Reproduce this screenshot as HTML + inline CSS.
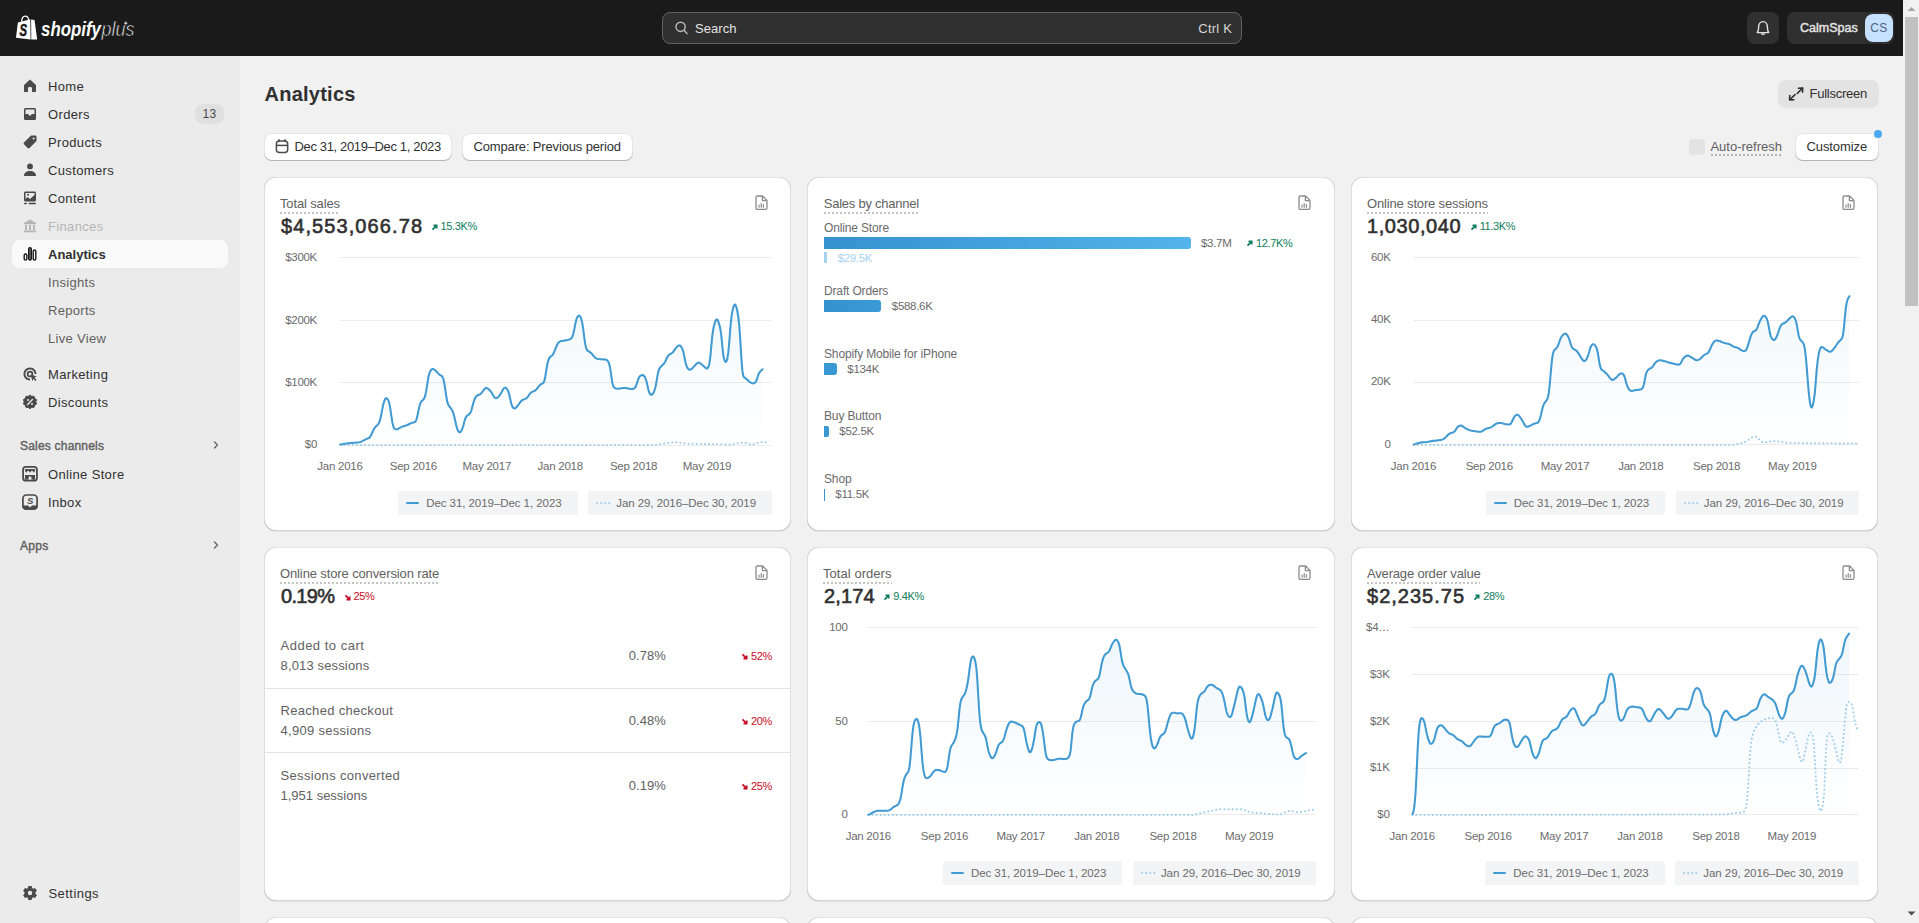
<!DOCTYPE html>
<html><head><meta charset="utf-8"><title>Analytics</title><style>
*{box-sizing:border-box;margin:0;padding:0}
html,body{width:1919px;height:923px;overflow:hidden;background:#f1f1f1;font-family:"Liberation Sans",sans-serif}
.t{position:absolute;white-space:nowrap}
.r{position:absolute}
svg{position:absolute;overflow:visible}
.card{position:absolute;background:#fff;border-radius:12px;
 box-shadow:0 1px 0 0 rgba(26,26,26,.07), inset 1px 0 0 0 rgba(0,0,0,.13), inset -1px 0 0 0 rgba(0,0,0,.13), inset 0 -1px 0 0 rgba(0,0,0,.17), inset 0 1px 0 0 rgba(204,204,204,.5)}
.btn{position:absolute;background:#fff;border-radius:8px;
 box-shadow:inset 0 -1px 0 0 #b5b5b5, inset 0 0 0 1px rgba(0,0,0,.1), inset 0 .5px 0 1.5px #fff}
.dot{border-bottom:2px dotted #cccccc;}
</style></head>
<body>
<div class="r" style="left:0px;top:56px;width:240px;height:867px;background:#ebebeb"></div>
<svg style="left:20px;top:76px" width="20" height="20" viewBox="0 0 20 20"><path d="M4 9 L10 3.6 L16 9 L16 15 C16 15.6 15.6 16 15 16 L12 16 L12 12.2 C12 11.4 11.3 11 10 11 C8.7 11 8 11.4 8 12.2 L8 16 L5 16 C4.4 16 4 15.6 4 15 Z" fill="#4a4a4a"/></svg>
<div class="t" style="left:48.00px;top:80.00px;font-size:13px;line-height:13px;color:#303030;font-weight:400;letter-spacing:0.35px;">Home</div>
<svg style="left:20px;top:104px" width="20" height="20" viewBox="0 0 20 20"><path d="M5.6 4 L14.4 4 C15.3 4 16 4.7 16 5.6 L16 14.4 C16 15.3 15.3 16 14.4 16 L5.6 16 C4.7 16 4 15.3 4 14.4 L4 5.6 C4 4.7 4.7 4 5.6 4 Z M5.5 5.5 L5.5 10 L8 10 L10 12 L12 10 L14.5 10 L14.5 5.5 Z" fill="#4a4a4a" fill-rule="evenodd"/></svg>
<div class="t" style="left:48.00px;top:108.00px;font-size:13px;line-height:13px;color:#303030;font-weight:400;letter-spacing:0.35px;">Orders</div>
<svg style="left:20px;top:132px" width="20" height="20" viewBox="0 0 20 20"><path d="M11 3.5 L15 3.5 C15.8 3.5 16.5 4.2 16.5 5 L16.5 9 L9.5 16 C9 16.5 8.2 16.5 7.7 16 L4 12.3 C3.5 11.8 3.5 11 4 10.5 Z" fill="#4a4a4a"/><circle cx="13.6" cy="6.5" r="1.1" fill="#ebebeb"/></svg>
<div class="t" style="left:48.00px;top:136.00px;font-size:13px;line-height:13px;color:#303030;font-weight:400;letter-spacing:0.35px;">Products</div>
<svg style="left:20px;top:160px" width="20" height="20" viewBox="0 0 20 20"><circle cx="10" cy="6.4" r="2.9" fill="#4a4a4a"/><path d="M4 16 C4 12.5 6.5 11 10 11 C13.5 11 16 12.5 16 16 Z" fill="#4a4a4a"/></svg>
<div class="t" style="left:48.00px;top:164.00px;font-size:13px;line-height:13px;color:#303030;font-weight:400;letter-spacing:0.35px;">Customers</div>
<svg style="left:20px;top:188px" width="20" height="20" viewBox="0 0 20 20"><path d="M5.5 3.5 L14.5 3.5 C15.3 3.5 16 4.2 16 5 L16 12 C16 12.8 15.3 13.5 14.5 13.5 L5.5 13.5 C4.7 13.5 4 12.8 4 12 L4 5 C4 4.2 4.7 3.5 5.5 3.5 Z M5.5 5 L5.5 11 L7.5 9 L10 11 L14.5 7 L14.5 5 Z" fill="#4a4a4a" fill-rule="evenodd"/><circle cx="8" cy="6.8" r="1" fill="#4a4a4a"/><rect x="4" y="14.8" width="3" height="1.4" rx=".7" fill="#4a4a4a"/><rect x="8.5" y="14.8" width="7.5" height="1.4" rx=".7" fill="#4a4a4a"/></svg>
<div class="t" style="left:48.00px;top:192.00px;font-size:13px;line-height:13px;color:#303030;font-weight:400;letter-spacing:0.35px;">Content</div>
<svg style="left:20px;top:216px" width="20" height="20" viewBox="0 0 20 20"><path d="M10 3.5 L16 7 L16 8.2 L4 8.2 L4 7 Z" fill="#b5b5b5"/><rect x="5" y="9" width="2" height="5" fill="#b5b5b5"/><rect x="9" y="9" width="2" height="5" fill="#b5b5b5"/><rect x="13" y="9" width="2" height="5" fill="#b5b5b5"/><rect x="4" y="14.5" width="12" height="1.8" fill="#b5b5b5"/></svg>
<div class="t" style="left:48.00px;top:220.00px;font-size:13px;line-height:13px;color:#b5b5b5;font-weight:400;letter-spacing:0.35px;">Finances</div>
<div class="r" style="left:195px;top:104px;width:29px;height:20px;background:#e0e0e0;border-radius:8px"></div>
<div class="t" style="left:209.50px;top:107.84px;font-size:12px;line-height:12px;color:#4a4a4a;font-weight:400;transform:translateX(-50%);letter-spacing:0.3px;">13</div>
<div class="r" style="left:12px;top:240px;width:216px;height:28px;background:#fafafa;border-radius:8px"></div>
<svg style="left:20px;top:244px" width="20" height="20" viewBox="0 0 20 20"><rect x="4.2" y="10" width="2.6" height="6" rx="1.3" fill="none" stroke="#1a1a1a" stroke-width="1.4"/><rect x="8.7" y="3.6" width="2.6" height="12.4" rx="1.3" fill="#1a1a1a" stroke="#1a1a1a" stroke-width="1.4"/><rect x="13.2" y="6" width="2.6" height="10" rx="1.3" fill="none" stroke="#1a1a1a" stroke-width="1.4"/><rect x="9.5" y="4.5" width="1" height="10.5" fill="#888"/></svg>
<div class="t" style="left:48.00px;top:248.00px;font-size:13px;line-height:13px;color:#303030;font-weight:700;letter-spacing:0.0px;">Analytics</div>
<div class="t" style="left:48.00px;top:276.00px;font-size:13px;line-height:13px;color:#616161;font-weight:400;letter-spacing:0.3px;">Insights</div>
<div class="t" style="left:48.00px;top:304.00px;font-size:13px;line-height:13px;color:#616161;font-weight:400;letter-spacing:0.3px;">Reports</div>
<div class="t" style="left:48.00px;top:332.00px;font-size:13px;line-height:13px;color:#616161;font-weight:400;letter-spacing:0.3px;">Live View</div>
<svg style="left:20px;top:364px" width="20" height="20" viewBox="0 0 20 20"><path d="M10 3.5 C6.4 3.5 3.5 6.4 3.5 10 C3.5 13.6 6.4 16.5 10 16.5 L10 14.6 C7.5 14.6 5.4 12.5 5.4 10 C5.4 7.5 7.5 5.4 10 5.4 C12.5 5.4 14.6 7.5 14.6 10 L16.5 10 C16.5 6.4 13.6 3.5 10 3.5 Z" fill="#4a4a4a"/><circle cx="10" cy="10" r="2.4" fill="none" stroke="#4a4a4a" stroke-width="1.7"/><path d="M10.6 10.6 L16.8 12.6 L14.4 13.8 L16.6 16 L15.6 17 L13.4 14.8 L12.4 17.2 Z" fill="#4a4a4a"/></svg>
<div class="t" style="left:48.00px;top:368.00px;font-size:13px;line-height:13px;color:#303030;font-weight:400;letter-spacing:0.35px;">Marketing</div>
<svg style="left:20px;top:392px" width="20" height="20" viewBox="0 0 20 20"><path d="M10 3 L11.8 4.4 L14 4.2 L14.6 6.4 L16.6 7.6 L15.8 9.8 L16.6 12 L14.6 13.2 L14 15.4 L11.8 15.2 L10 16.8 L8.2 15.2 L6 15.4 L5.4 13.2 L3.4 12 L4.2 9.8 L3.4 7.6 L5.4 6.4 L6 4.2 L8.2 4.4 Z" fill="#4a4a4a" stroke="#4a4a4a" stroke-width="1" stroke-linejoin="round"/><path d="M7.6 12.4 L12.4 7.6" stroke="#ebebeb" stroke-width="1.4" stroke-linecap="round"/><circle cx="8" cy="8" r="1" fill="#ebebeb"/><circle cx="12" cy="12" r="1" fill="#ebebeb"/></svg>
<div class="t" style="left:48.00px;top:396.00px;font-size:13px;line-height:13px;color:#303030;font-weight:400;letter-spacing:0.35px;">Discounts</div>
<div class="t" style="left:20.00px;top:440.14px;font-size:12px;line-height:12px;color:#616161;font-weight:400;letter-spacing:0.2px;-webkit-text-stroke:0.4px #616161;">Sales channels</div>
<svg style="left:210px;top:439px" width="12" height="12" viewBox="0 0 12 12"><path d="M4.5 3 L7.5 6 L4.5 9" fill="none" stroke="#616161" stroke-width="1.3" stroke-linecap="round" stroke-linejoin="round"/></svg>
<svg style="left:20px;top:464px" width="20" height="20" viewBox="0 0 20 20"><rect x="2.2" y="2" width="15.6" height="15.5" rx="3.6" fill="#4a4a4a"/><rect x="4" y="3.8" width="12" height="11.9" rx="1.6" fill="#ebebeb"/><rect x="5" y="5.1" width="10" height="1.9" fill="#4a4a4a"/><path d="M5 7 L7.4 7 L6.2 8.8 Z M8.8 7 L11.2 7 L10 8.8 Z M12.6 7 L15 7 L13.8 8.8 Z" fill="#4a4a4a"/><rect x="5" y="11" width="10" height="4.7" fill="#4a4a4a"/><rect x="8.6" y="12.6" width="2.8" height="3.1" fill="#ebebeb"/></svg>
<div class="t" style="left:48.00px;top:468.00px;font-size:13px;line-height:13px;color:#303030;font-weight:400;letter-spacing:0.35px;">Online Store</div>
<svg style="left:20px;top:492px" width="20" height="20" viewBox="0 0 20 20"><rect x="2.9" y="3" width="14.2" height="14" rx="3.4" fill="none" stroke="#4a4a4a" stroke-width="1.7"/><path d="M2.2 13.4 L8 13.4 L10 15.4 L12 13.4 L17.8 13.4 L17.8 14.2 C17.8 16.4 16.3 17.8 14.2 17.8 L5.8 17.8 C3.7 17.8 2.2 16.4 2.2 14.2 Z" fill="#4a4a4a"/><text x="10.2" y="12.4" font-family="Liberation Sans" font-weight="700" font-style="italic" font-size="9.5" fill="#4a4a4a" text-anchor="middle">S</text></svg>
<div class="t" style="left:48.00px;top:496.00px;font-size:13px;line-height:13px;color:#303030;font-weight:400;letter-spacing:0.35px;">Inbox</div>
<div class="t" style="left:20.00px;top:540.14px;font-size:12px;line-height:12px;color:#616161;font-weight:400;letter-spacing:0.3px;-webkit-text-stroke:0.4px #616161;">Apps</div>
<svg style="left:210px;top:539px" width="12" height="12" viewBox="0 0 12 12"><path d="M4.5 3 L7.5 6 L4.5 9" fill="none" stroke="#616161" stroke-width="1.3" stroke-linecap="round" stroke-linejoin="round"/></svg>
<svg style="left:20px;top:883px" width="20" height="20" viewBox="0 0 20 20"><path d="M8.6 3.5 L11.4 3.5 L11.8 5.4 L13.2 6.2 L15 5.5 L16.4 7.9 L15 9.2 L15 10.8 L16.4 12.1 L15 14.5 L13.2 13.8 L11.8 14.6 L11.4 16.5 L8.6 16.5 L8.2 14.6 L6.8 13.8 L5 14.5 L3.6 12.1 L5 10.8 L5 9.2 L3.6 7.9 L5 5.5 L6.8 6.2 L8.2 5.4 Z" fill="#4a4a4a" stroke="#4a4a4a" stroke-width="1" stroke-linejoin="round"/><circle cx="10" cy="10" r="2.2" fill="#ebebeb"/></svg>
<div class="t" style="left:48.50px;top:886.80px;font-size:13px;line-height:13px;color:#303030;font-weight:400;letter-spacing:0.45px;">Settings</div>
<div class="t" style="left:264.50px;top:84.27px;font-size:20px;line-height:20px;color:#303030;font-weight:700;letter-spacing:0.25px;">Analytics</div>
<div class="r" style="left:1778px;top:80px;width:101px;height:28px;background:#e3e3e3;border-radius:8px"></div>
<svg style="left:1784px;top:82px" width="24" height="24" viewBox="0 0 24 24">
<path d="M14.4 6.2 L18.7 6 L18.5 10.3" fill="none" stroke="#303030" stroke-width="1.6" stroke-linecap="round" stroke-linejoin="round"/>
<path d="M18.3 6.4 L13.2 11.5" stroke="#303030" stroke-width="1.6" stroke-linecap="round"/>
<path d="M5.8 13.6 L5.6 17.9 L9.9 17.7" fill="none" stroke="#303030" stroke-width="1.6" stroke-linecap="round" stroke-linejoin="round"/>
<path d="M6 17.5 L11 12.6" stroke="#303030" stroke-width="1.6" stroke-linecap="round"/></svg>
<div class="t" style="left:1809.50px;top:87.10px;font-size:13px;line-height:13px;color:#303030;font-weight:400;letter-spacing:-0.25px;">Fullscreen</div>
<div class="btn" style="left:264px;top:133px;width:188px;height:28px"></div>
<svg style="left:270px;top:134px" width="24" height="24" viewBox="0 0 24 24">
<rect x="6.4" y="6.9" width="11.3" height="11.7" rx="3" fill="none" stroke="#4a4a4a" stroke-width="1.5"/>
<path d="M6.6 11.4 L17.5 11.4" stroke="#4a4a4a" stroke-width="1.5"/>
<path d="M9 5.8 L9 7.5 M15 5.8 L15 7.5" stroke="#4a4a4a" stroke-width="1.5" stroke-linecap="round"/></svg>
<div class="t" style="left:294.50px;top:140.00px;font-size:13px;line-height:13px;color:#303030;font-weight:400;letter-spacing:-0.35px;">Dec 31, 2019–Dec 1, 2023</div>
<div class="btn" style="left:461.5px;top:133px;width:171px;height:28px"></div>
<div class="t" style="left:473.50px;top:139.80px;font-size:13px;line-height:13px;color:#303030;font-weight:400;letter-spacing:-0.15px;">Compare: Previous period</div>
<div class="r" style="left:1689px;top:139px;width:16px;height:16px;background:#e3e3e3;border-radius:4px"></div>
<div class="t" style="left:1710.40px;top:139.80px;font-size:13px;line-height:13px;color:#616161;font-weight:400;letter-spacing:0.0px;">Auto-refresh</div>
<div class="r" style="left:1710.5px;top:154px;width:71px;height:2px;background-image:linear-gradient(90deg,#b5b5b5 50%,transparent 50%);background-size:4px 2px"></div>
<div class="btn" style="left:1794.5px;top:133px;width:84px;height:28px"></div>
<div class="t" style="left:1806.50px;top:140.00px;font-size:13px;line-height:13px;color:#303030;font-weight:400;letter-spacing:-0.1px;">Customize</div>
<div class="r" style="left:1874px;top:130px;width:8px;height:8px;background:#4aa8ef;border-radius:50%;box-shadow:0 0 0 1.5px #f1f1f1"></div>
<div class="card" style="left:264px;top:177px;width:527.33px;height:354px"></div>
<svg style="left:280px;top:193px" width="70" height="20"><text x="0" y="15.3" font-family="Liberation Sans" font-size="13" fill="#616161" textLength="60" lengthAdjust="spacing">Total sales</text></svg>
<div class="r" style="left:280px;top:212px;width:60px;height:2px;background-image:linear-gradient(90deg,#c4c4c4 50%,transparent 50%);background-size:4px 2px"></div>
<svg style="left:755px;top:195px" width="14" height="16" viewBox="0 0 14 16">
<path d="M2.2 1 L7.6 1 L12 5.4 L12 12.8 C12 13.8 11.3 14.4 10.4 14.4 L2.6 14.4 C1.7 14.4 1 13.8 1 12.8 L1 2.4 C1 1.6 1.5 1 2.2 1 Z" fill="none" stroke="#8a8a8a" stroke-width="1.3" stroke-linejoin="round"/>
<path d="M7.4 1.3 L7.4 5.6 L11.7 5.6" fill="none" stroke="#8a8a8a" stroke-width="1.3"/>
<path d="M4 12.2 L4 10 M6.2 12.2 L6.2 8.6 M8.4 12.2 L8.4 9.6" stroke="#8a8a8a" stroke-width="1.2" stroke-linecap="round"/></svg>
<svg style="left:280.5px;top:215px" width="151" height="24"><text x="0" y="18.2" font-family="Liberation Sans" font-weight="400" font-size="20" fill="#303030" stroke="#303030" stroke-width="0.6" textLength="141" lengthAdjust="spacing">$4,553,066.78</text></svg>
<svg style="left:430.5px;top:222.5px" width="8" height="9" viewBox="0 0 8 9"><path d="M1.5 6.6 L5.7 2.4 M2.5 2.4 L5.7 2.4 L5.7 5.6" fill="none" stroke="#0c7d5b" stroke-width="1.7" stroke-linecap="butt" stroke-linejoin="miter"/></svg>
<div class="t" style="left:440.50px;top:221.19px;font-size:11px;line-height:11px;color:#0c7d5b;font-weight:400;letter-spacing:-0.35px;">15.3K%</div>
<div class="r" style="left:340px;top:257px;width:431.20000000000005px;height:1px;background:#ebebeb"></div>
<div class="t" style="left:317.00px;top:252.07px;font-size:11.5px;line-height:11.5px;color:#6b6b6b;font-weight:400;transform:translateX(-100%);letter-spacing:-0.3px;">$300K</div>
<div class="r" style="left:340px;top:320px;width:431.20000000000005px;height:1px;background:#ebebeb"></div>
<div class="t" style="left:317.00px;top:314.67px;font-size:11.5px;line-height:11.5px;color:#6b6b6b;font-weight:400;transform:translateX(-100%);letter-spacing:-0.3px;">$200K</div>
<div class="r" style="left:340px;top:382px;width:431.20000000000005px;height:1px;background:#ebebeb"></div>
<div class="t" style="left:317.00px;top:377.07px;font-size:11.5px;line-height:11.5px;color:#6b6b6b;font-weight:400;transform:translateX(-100%);letter-spacing:-0.3px;">$100K</div>
<div class="r" style="left:340px;top:445px;width:431.20000000000005px;height:1px;background:#ebebeb"></div>
<div class="t" style="left:317.00px;top:439.47px;font-size:11.5px;line-height:11.5px;color:#6b6b6b;font-weight:400;transform:translateX(-100%);letter-spacing:-0.3px;">$0</div>
<div class="t" style="left:340.00px;top:460.87px;font-size:11.5px;line-height:11.5px;color:#6b6b6b;font-weight:400;transform:translateX(-50%);letter-spacing:-0.25px;">Jan 2016</div>
<div class="t" style="left:413.40px;top:460.87px;font-size:11.5px;line-height:11.5px;color:#6b6b6b;font-weight:400;transform:translateX(-50%);letter-spacing:-0.25px;">Sep 2016</div>
<div class="t" style="left:486.79px;top:460.87px;font-size:11.5px;line-height:11.5px;color:#6b6b6b;font-weight:400;transform:translateX(-50%);letter-spacing:-0.25px;">May 2017</div>
<div class="t" style="left:560.19px;top:460.87px;font-size:11.5px;line-height:11.5px;color:#6b6b6b;font-weight:400;transform:translateX(-50%);letter-spacing:-0.25px;">Jan 2018</div>
<div class="t" style="left:633.58px;top:460.87px;font-size:11.5px;line-height:11.5px;color:#6b6b6b;font-weight:400;transform:translateX(-50%);letter-spacing:-0.25px;">Sep 2018</div>
<div class="t" style="left:706.98px;top:460.87px;font-size:11.5px;line-height:11.5px;color:#6b6b6b;font-weight:400;transform:translateX(-50%);letter-spacing:-0.25px;">May 2019</div>
<svg style="left:0;top:0" width="1903" height="923" viewBox="0 0 1903 923">
<defs><linearGradient id="g1" x1="0" y1="257.8" x2="0" y2="445.2" gradientUnits="userSpaceOnUse"><stop offset="0" stop-color="#419bd2" stop-opacity="0.09"/><stop offset="1" stop-color="#419bd2" stop-opacity="0"/></linearGradient></defs>
<path d="M340.3 444.44 L341.3 444.32 L342.3 444.15 L343.3 443.98 L344.3 443.82 L345.3 443.66 L346.3 443.52 L347.3 443.39 L348.3 443.28 L349.3 443.18 L350.3 443.08 L351.3 442.99 L352.3 442.90 L353.3 442.80 L354.3 442.72 L355.3 442.66 L356.3 442.60 L357.3 442.54 L358.3 442.44 L359.3 442.29 L360.3 442.05 L361.3 441.68 L362.3 441.18 L363.3 440.63 L364.3 440.09 L365.3 439.56 L366.3 439.05 L367.3 438.61 L368.3 438.25 L369.3 437.75 L370.3 436.62 L371.3 434.66 L372.3 432.34 L373.3 430.20 L374.3 428.38 L375.3 427.02 L376.3 426.07 L377.3 425.23 L378.3 424.09 L379.3 422.20 L380.3 419.18 L381.3 414.59 L382.3 409.09 L383.3 404.39 L384.3 400.91 L385.3 398.74 L386.3 398.12 L387.3 398.75 L388.3 400.27 L389.3 403.22 L390.3 408.62 L391.3 415.55 L392.3 421.96 L393.3 426.43 L394.3 428.52 L395.3 429.22 L396.3 429.34 L397.3 429.16 L398.3 428.74 L399.3 428.19 L400.3 427.60 L401.3 427.07 L402.3 426.63 L403.3 426.28 L404.3 425.97 L405.3 425.67 L406.3 425.34 L407.3 424.95 L408.3 424.50 L409.3 424.00 L410.3 423.51 L411.3 423.09 L412.3 422.78 L413.3 422.57 L414.3 422.30 L415.3 421.67 L416.3 419.98 L417.3 416.39 L418.3 411.54 L419.3 406.96 L420.3 403.49 L421.3 401.50 L422.3 400.50 L423.3 399.70 L424.3 398.31 L425.3 395.41 L426.3 390.38 L427.3 383.78 L428.3 377.56 L429.3 373.55 L430.3 371.13 L431.3 369.64 L432.3 369.00 L433.3 369.07 L434.3 369.58 L435.3 370.31 L436.3 371.25 L437.3 372.41 L438.3 373.59 L439.3 374.52 L440.3 375.14 L441.3 375.67 L442.3 376.60 L443.3 378.83 L444.3 383.29 L445.3 389.65 L446.3 396.55 L447.3 401.93 L448.3 404.85 L449.3 406.36 L450.3 407.51 L451.3 408.88 L452.3 410.73 L453.3 413.23 L454.3 416.74 L455.3 421.31 L456.3 425.68 L457.3 428.99 L458.3 431.30 L459.3 432.38 L460.3 432.08 L461.3 430.77 L462.3 428.74 L463.3 425.71 L464.3 421.81 L465.3 418.43 L466.3 416.43 L467.3 415.43 L468.3 414.82 L469.3 414.14 L470.3 412.93 L471.3 410.58 L472.3 406.92 L473.3 402.95 L474.3 399.86 L475.3 397.70 L476.3 396.30 L477.3 395.49 L478.3 395.01 L479.3 394.61 L480.3 394.06 L481.3 393.19 L482.3 391.96 L483.3 390.54 L484.3 389.24 L485.3 388.35 L486.3 388.05 L487.3 388.28 L488.3 388.87 L489.3 389.69 L490.3 390.73 L491.3 392.12 L492.3 393.86 L493.3 395.69 L494.3 397.18 L495.3 398.01 L496.3 398.13 L497.3 397.71 L498.3 396.96 L499.3 395.91 L500.3 394.45 L501.3 392.66 L502.3 390.78 L503.3 389.10 L504.3 387.94 L505.3 387.62 L506.3 388.18 L507.3 389.46 L508.3 391.47 L509.3 394.76 L510.3 399.44 L511.3 403.79 L512.3 406.47 L513.3 407.86 L514.3 408.41 L515.3 408.15 L516.3 407.25 L517.3 406.06 L518.3 404.82 L519.3 403.52 L520.3 402.20 L521.3 401.02 L522.3 400.12 L523.3 399.56 L524.3 399.21 L525.3 398.89 L526.3 398.37 L527.3 397.45 L528.3 396.11 L529.3 394.58 L530.3 393.25 L531.3 392.34 L532.3 391.79 L533.3 391.41 L534.3 391.00 L535.3 390.39 L536.3 389.46 L537.3 388.28 L538.3 386.97 L539.3 385.71 L540.3 384.70 L541.3 384.05 L542.3 383.62 L543.3 382.97 L544.3 381.07 L545.3 376.49 L546.3 370.00 L547.3 364.35 L548.3 360.36 L549.3 357.98 L550.3 356.78 L551.3 356.08 L552.3 355.30 L553.3 353.91 L554.3 351.73 L555.3 349.19 L556.3 346.72 L557.3 344.49 L558.3 342.84 L559.3 341.86 L560.3 341.36 L561.3 341.09 L562.3 340.92 L563.3 340.75 L564.3 340.56 L565.3 340.37 L566.3 340.20 L567.3 340.05 L568.3 339.86 L569.3 339.59 L570.3 339.14 L571.3 338.29 L572.3 336.67 L573.3 333.85 L574.3 329.43 L575.3 323.98 L576.3 319.68 L577.3 317.10 L578.3 315.76 L579.3 315.64 L580.3 316.70 L581.3 318.91 L582.3 323.08 L583.3 329.72 L584.3 337.52 L585.3 344.45 L586.3 348.58 L587.3 350.38 L588.3 351.20 L589.3 351.75 L590.3 352.35 L591.3 353.18 L592.3 354.30 L593.3 355.56 L594.3 356.77 L595.3 357.74 L596.3 358.41 L597.3 358.79 L598.3 358.99 L599.3 359.09 L600.3 359.15 L601.3 359.22 L602.3 359.31 L603.3 359.39 L604.3 359.45 L605.3 359.54 L606.3 359.77 L607.3 360.34 L608.3 361.65 L609.3 364.21 L610.3 368.85 L611.3 375.98 L612.3 382.67 L613.3 386.26 L614.3 387.69 L615.3 388.28 L616.3 388.56 L617.3 388.70 L618.3 388.71 L619.3 388.61 L620.3 388.46 L621.3 388.28 L622.3 388.11 L623.3 387.99 L624.3 387.93 L625.3 387.98 L626.3 388.12 L627.3 388.33 L628.3 388.58 L629.3 388.81 L630.3 388.99 L631.3 389.06 L632.3 389.01 L633.3 388.81 L634.3 388.35 L635.3 387.31 L636.3 385.24 L637.3 382.19 L638.3 379.14 L639.3 377.04 L640.3 375.88 L641.3 375.25 L642.3 375.01 L643.3 375.32 L644.3 376.33 L645.3 378.04 L646.3 380.66 L647.3 384.78 L648.3 389.45 L649.3 392.62 L650.3 394.28 L651.3 394.91 L652.3 394.47 L653.3 393.05 L654.3 390.88 L655.3 387.76 L656.3 382.83 L657.3 376.58 L658.3 371.63 L659.3 368.89 L660.3 367.37 L661.3 366.24 L662.3 365.22 L663.3 364.25 L664.3 363.13 L665.3 361.48 L666.3 359.29 L667.3 357.14 L668.3 355.60 L669.3 354.67 L670.3 354.06 L671.3 353.49 L672.3 352.75 L673.3 351.69 L674.3 350.34 L675.3 348.94 L676.3 347.68 L677.3 346.56 L678.3 345.70 L679.3 345.37 L680.3 345.79 L681.3 346.95 L682.3 348.76 L683.3 351.63 L684.3 356.27 L685.3 361.60 L686.3 365.44 L687.3 367.62 L688.3 368.95 L689.3 369.66 L690.3 369.71 L691.3 369.14 L692.3 368.20 L693.3 367.14 L694.3 366.09 L695.3 365.03 L696.3 363.96 L697.3 363.08 L698.3 362.62 L699.3 362.71 L700.3 363.27 L701.3 364.09 L702.3 364.97 L703.3 365.85 L704.3 366.79 L705.3 367.72 L706.3 368.39 L707.3 368.37 L708.3 367.12 L709.3 364.02 L710.3 357.37 L711.3 346.09 L712.3 335.54 L713.3 329.02 L714.3 324.53 L715.3 321.23 L716.3 319.46 L717.3 319.59 L718.3 321.47 L719.3 324.60 L720.3 328.82 L721.3 335.42 L722.3 345.83 L723.3 355.19 L724.3 359.78 L725.3 361.70 L726.3 361.76 L727.3 358.81 L728.3 352.20 L729.3 341.73 L730.3 328.60 L731.3 318.06 L732.3 311.64 L733.3 307.38 L734.3 304.84 L735.3 304.62 L736.3 306.84 L737.3 310.98 L738.3 316.92 L739.3 326.20 L740.3 340.25 L741.3 356.87 L742.3 370.17 L743.3 376.02 L744.3 377.55 L745.3 378.18 L746.3 378.88 L747.3 379.81 L748.3 380.81 L749.3 381.69 L750.3 382.38 L751.3 382.92 L752.3 383.28 L753.3 383.38 L754.3 383.13 L755.3 382.42 L756.3 380.82 L757.3 377.90 L758.3 374.73 L759.3 372.65 L760.3 371.38 L761.3 370.41 L762.3 369.74 L762.5 369.30 L762.5 445.2 L340.3 445.2 Z" fill="url(#g1)"/>
<path d="M340.3 445.00 L341.3 445.00 L342.3 445.00 L343.3 445.00 L344.3 445.00 L345.3 445.00 L346.3 445.00 L347.3 445.00 L348.3 445.00 L349.3 445.00 L350.3 445.00 L351.3 445.00 L352.3 445.00 L353.3 445.00 L354.3 445.00 L355.3 445.00 L356.3 445.00 L357.3 445.00 L358.3 445.00 L359.3 445.00 L360.3 445.00 L361.3 445.00 L362.3 445.00 L363.3 445.00 L364.3 445.00 L365.3 445.00 L366.3 445.00 L367.3 445.00 L368.3 445.00 L369.3 445.00 L370.3 445.00 L371.3 445.00 L372.3 445.00 L373.3 445.00 L374.3 445.00 L375.3 445.00 L376.3 445.00 L377.3 445.00 L378.3 445.00 L379.3 445.00 L380.3 445.00 L381.3 445.00 L382.3 445.00 L383.3 445.00 L384.3 445.00 L385.3 445.00 L386.3 445.00 L387.3 445.00 L388.3 445.00 L389.3 445.00 L390.3 445.00 L391.3 445.00 L392.3 445.00 L393.3 445.00 L394.3 445.00 L395.3 445.00 L396.3 445.00 L397.3 445.00 L398.3 445.00 L399.3 445.00 L400.3 445.00 L401.3 445.00 L402.3 445.00 L403.3 445.00 L404.3 445.00 L405.3 445.00 L406.3 445.00 L407.3 445.00 L408.3 445.00 L409.3 445.00 L410.3 445.00 L411.3 445.00 L412.3 445.00 L413.3 445.00 L414.3 445.00 L415.3 445.00 L416.3 445.00 L417.3 445.00 L418.3 445.00 L419.3 445.00 L420.3 445.00 L421.3 445.00 L422.3 445.00 L423.3 445.00 L424.3 445.00 L425.3 445.00 L426.3 445.00 L427.3 445.00 L428.3 445.00 L429.3 445.00 L430.3 445.00 L431.3 445.00 L432.3 445.00 L433.3 445.00 L434.3 445.00 L435.3 445.00 L436.3 445.00 L437.3 445.00 L438.3 445.00 L439.3 445.00 L440.3 445.00 L441.3 445.00 L442.3 445.00 L443.3 445.00 L444.3 445.00 L445.3 445.00 L446.3 445.00 L447.3 445.00 L448.3 445.00 L449.3 445.00 L450.3 445.00 L451.3 445.00 L452.3 445.00 L453.3 445.00 L454.3 445.00 L455.3 445.00 L456.3 445.00 L457.3 445.00 L458.3 445.00 L459.3 445.00 L460.3 445.00 L461.3 445.00 L462.3 445.00 L463.3 445.00 L464.3 445.00 L465.3 445.00 L466.3 445.00 L467.3 445.00 L468.3 445.00 L469.3 445.00 L470.3 445.00 L471.3 445.00 L472.3 445.00 L473.3 445.00 L474.3 445.00 L475.3 445.00 L476.3 445.00 L477.3 445.00 L478.3 445.00 L479.3 445.00 L480.3 445.00 L481.3 445.00 L482.3 445.00 L483.3 445.00 L484.3 445.00 L485.3 445.00 L486.3 445.00 L487.3 445.00 L488.3 445.00 L489.3 445.00 L490.3 445.00 L491.3 445.00 L492.3 445.00 L493.3 445.00 L494.3 445.00 L495.3 445.00 L496.3 445.00 L497.3 445.00 L498.3 445.00 L499.3 445.00 L500.3 445.00 L501.3 445.00 L502.3 445.00 L503.3 445.00 L504.3 445.00 L505.3 445.00 L506.3 445.00 L507.3 445.00 L508.3 445.00 L509.3 445.00 L510.3 445.00 L511.3 445.00 L512.3 445.00 L513.3 445.00 L514.3 445.00 L515.3 445.00 L516.3 445.00 L517.3 445.00 L518.3 445.00 L519.3 445.00 L520.3 445.00 L521.3 445.00 L522.3 445.00 L523.3 445.00 L524.3 445.00 L525.3 445.00 L526.3 445.00 L527.3 445.00 L528.3 445.00 L529.3 445.00 L530.3 445.00 L531.3 445.00 L532.3 445.00 L533.3 445.00 L534.3 445.00 L535.3 445.00 L536.3 445.00 L537.3 445.00 L538.3 445.00 L539.3 445.00 L540.3 445.00 L541.3 445.00 L542.3 445.00 L543.3 445.00 L544.3 445.00 L545.3 445.00 L546.3 445.00 L547.3 445.00 L548.3 445.00 L549.3 445.00 L550.3 445.00 L551.3 445.00 L552.3 445.00 L553.3 445.00 L554.3 445.00 L555.3 445.00 L556.3 445.00 L557.3 445.00 L558.3 445.00 L559.3 445.00 L560.3 445.00 L561.3 445.00 L562.3 445.00 L563.3 445.00 L564.3 445.00 L565.3 445.00 L566.3 445.00 L567.3 445.00 L568.3 445.00 L569.3 445.00 L570.3 445.00 L571.3 445.00 L572.3 445.00 L573.3 445.00 L574.3 445.00 L575.3 445.00 L576.3 445.00 L577.3 445.00 L578.3 445.00 L579.3 445.00 L580.3 445.00 L581.3 445.00 L582.3 445.00 L583.3 445.00 L584.3 445.00 L585.3 445.00 L586.3 445.00 L587.3 445.00 L588.3 445.00 L589.3 445.00 L590.3 445.00 L591.3 445.00 L592.3 445.00 L593.3 445.00 L594.3 445.00 L595.3 445.00 L596.3 445.00 L597.3 445.00 L598.3 445.00 L599.3 445.00 L600.3 445.00 L601.3 445.00 L602.3 445.00 L603.3 445.00 L604.3 445.00 L605.3 445.00 L606.3 445.00 L607.3 445.00 L608.3 445.00 L609.3 445.00 L610.3 445.00 L611.3 445.00 L612.3 445.00 L613.3 445.00 L614.3 445.00 L615.3 445.00 L616.3 445.00 L617.3 445.00 L618.3 445.00 L619.3 445.00 L620.3 445.00 L621.3 445.00 L622.3 445.00 L623.3 445.00 L624.3 445.00 L625.3 445.00 L626.3 445.00 L627.3 445.00 L628.3 445.00 L629.3 445.00 L630.3 445.00 L631.3 445.00 L632.3 445.00 L633.3 445.00 L634.3 445.00 L635.3 445.00 L636.3 445.00 L637.3 445.00 L638.3 445.00 L639.3 445.00 L640.3 445.00 L641.3 445.00 L642.3 445.00 L643.3 445.00 L644.3 445.00 L645.3 445.00 L646.3 445.00 L647.3 445.01 L648.3 445.02 L649.3 445.04 L650.3 445.06 L651.3 445.08 L652.3 445.09 L653.3 445.07 L654.3 445.03 L655.3 444.97 L656.3 444.87 L657.3 444.74 L658.3 444.60 L659.3 444.44 L660.3 444.27 L661.3 444.09 L662.3 443.92 L663.3 443.76 L664.3 443.60 L665.3 443.46 L666.3 443.31 L667.3 443.15 L668.3 443.00 L669.3 442.84 L670.3 442.69 L671.3 442.56 L672.3 442.45 L673.3 442.37 L674.3 442.32 L675.3 442.32 L676.3 442.36 L677.3 442.44 L678.3 442.56 L679.3 442.71 L680.3 442.87 L681.3 443.03 L682.3 443.18 L683.3 443.32 L684.3 443.43 L685.3 443.52 L686.3 443.59 L687.3 443.64 L688.3 443.69 L689.3 443.74 L690.3 443.77 L691.3 443.81 L692.3 443.83 L693.3 443.86 L694.3 443.88 L695.3 443.90 L696.3 443.92 L697.3 443.94 L698.3 443.96 L699.3 443.98 L700.3 444.01 L701.3 444.03 L702.3 444.05 L703.3 444.06 L704.3 444.08 L705.3 444.09 L706.3 444.10 L707.3 444.11 L708.3 444.12 L709.3 444.13 L710.3 444.14 L711.3 444.15 L712.3 444.17 L713.3 444.18 L714.3 444.19 L715.3 444.21 L716.3 444.22 L717.3 444.24 L718.3 444.25 L719.3 444.27 L720.3 444.29 L721.3 444.31 L722.3 444.33 L723.3 444.35 L724.3 444.37 L725.3 444.41 L726.3 444.45 L727.3 444.50 L728.3 444.54 L729.3 444.57 L730.3 444.57 L731.3 444.54 L732.3 444.48 L733.3 444.36 L734.3 444.21 L735.3 444.03 L736.3 443.83 L737.3 443.61 L738.3 443.40 L739.3 443.19 L740.3 443.00 L741.3 442.81 L742.3 442.63 L743.3 442.54 L744.3 442.58 L745.3 442.78 L746.3 443.08 L747.3 443.44 L748.3 443.79 L749.3 444.10 L750.3 444.33 L751.3 444.44 L752.3 444.41 L753.3 444.25 L754.3 443.99 L755.3 443.67 L756.3 443.31 L757.3 442.95 L758.3 442.61 L759.3 442.33 L760.3 442.14 L761.3 442.02 L762.3 441.96 L763.3 441.97 L764.3 442.07 L765.3 442.26 L766.3 442.50 L767.3 442.75 L768.0 443.00" fill="none" stroke="#9fcde9" stroke-width="2" stroke-dasharray="0.1 4" stroke-linecap="round"/>
<path d="M340.3 444.44 L341.3 444.32 L342.3 444.15 L343.3 443.98 L344.3 443.82 L345.3 443.66 L346.3 443.52 L347.3 443.39 L348.3 443.28 L349.3 443.18 L350.3 443.08 L351.3 442.99 L352.3 442.90 L353.3 442.80 L354.3 442.72 L355.3 442.66 L356.3 442.60 L357.3 442.54 L358.3 442.44 L359.3 442.29 L360.3 442.05 L361.3 441.68 L362.3 441.18 L363.3 440.63 L364.3 440.09 L365.3 439.56 L366.3 439.05 L367.3 438.61 L368.3 438.25 L369.3 437.75 L370.3 436.62 L371.3 434.66 L372.3 432.34 L373.3 430.20 L374.3 428.38 L375.3 427.02 L376.3 426.07 L377.3 425.23 L378.3 424.09 L379.3 422.20 L380.3 419.18 L381.3 414.59 L382.3 409.09 L383.3 404.39 L384.3 400.91 L385.3 398.74 L386.3 398.12 L387.3 398.75 L388.3 400.27 L389.3 403.22 L390.3 408.62 L391.3 415.55 L392.3 421.96 L393.3 426.43 L394.3 428.52 L395.3 429.22 L396.3 429.34 L397.3 429.16 L398.3 428.74 L399.3 428.19 L400.3 427.60 L401.3 427.07 L402.3 426.63 L403.3 426.28 L404.3 425.97 L405.3 425.67 L406.3 425.34 L407.3 424.95 L408.3 424.50 L409.3 424.00 L410.3 423.51 L411.3 423.09 L412.3 422.78 L413.3 422.57 L414.3 422.30 L415.3 421.67 L416.3 419.98 L417.3 416.39 L418.3 411.54 L419.3 406.96 L420.3 403.49 L421.3 401.50 L422.3 400.50 L423.3 399.70 L424.3 398.31 L425.3 395.41 L426.3 390.38 L427.3 383.78 L428.3 377.56 L429.3 373.55 L430.3 371.13 L431.3 369.64 L432.3 369.00 L433.3 369.07 L434.3 369.58 L435.3 370.31 L436.3 371.25 L437.3 372.41 L438.3 373.59 L439.3 374.52 L440.3 375.14 L441.3 375.67 L442.3 376.60 L443.3 378.83 L444.3 383.29 L445.3 389.65 L446.3 396.55 L447.3 401.93 L448.3 404.85 L449.3 406.36 L450.3 407.51 L451.3 408.88 L452.3 410.73 L453.3 413.23 L454.3 416.74 L455.3 421.31 L456.3 425.68 L457.3 428.99 L458.3 431.30 L459.3 432.38 L460.3 432.08 L461.3 430.77 L462.3 428.74 L463.3 425.71 L464.3 421.81 L465.3 418.43 L466.3 416.43 L467.3 415.43 L468.3 414.82 L469.3 414.14 L470.3 412.93 L471.3 410.58 L472.3 406.92 L473.3 402.95 L474.3 399.86 L475.3 397.70 L476.3 396.30 L477.3 395.49 L478.3 395.01 L479.3 394.61 L480.3 394.06 L481.3 393.19 L482.3 391.96 L483.3 390.54 L484.3 389.24 L485.3 388.35 L486.3 388.05 L487.3 388.28 L488.3 388.87 L489.3 389.69 L490.3 390.73 L491.3 392.12 L492.3 393.86 L493.3 395.69 L494.3 397.18 L495.3 398.01 L496.3 398.13 L497.3 397.71 L498.3 396.96 L499.3 395.91 L500.3 394.45 L501.3 392.66 L502.3 390.78 L503.3 389.10 L504.3 387.94 L505.3 387.62 L506.3 388.18 L507.3 389.46 L508.3 391.47 L509.3 394.76 L510.3 399.44 L511.3 403.79 L512.3 406.47 L513.3 407.86 L514.3 408.41 L515.3 408.15 L516.3 407.25 L517.3 406.06 L518.3 404.82 L519.3 403.52 L520.3 402.20 L521.3 401.02 L522.3 400.12 L523.3 399.56 L524.3 399.21 L525.3 398.89 L526.3 398.37 L527.3 397.45 L528.3 396.11 L529.3 394.58 L530.3 393.25 L531.3 392.34 L532.3 391.79 L533.3 391.41 L534.3 391.00 L535.3 390.39 L536.3 389.46 L537.3 388.28 L538.3 386.97 L539.3 385.71 L540.3 384.70 L541.3 384.05 L542.3 383.62 L543.3 382.97 L544.3 381.07 L545.3 376.49 L546.3 370.00 L547.3 364.35 L548.3 360.36 L549.3 357.98 L550.3 356.78 L551.3 356.08 L552.3 355.30 L553.3 353.91 L554.3 351.73 L555.3 349.19 L556.3 346.72 L557.3 344.49 L558.3 342.84 L559.3 341.86 L560.3 341.36 L561.3 341.09 L562.3 340.92 L563.3 340.75 L564.3 340.56 L565.3 340.37 L566.3 340.20 L567.3 340.05 L568.3 339.86 L569.3 339.59 L570.3 339.14 L571.3 338.29 L572.3 336.67 L573.3 333.85 L574.3 329.43 L575.3 323.98 L576.3 319.68 L577.3 317.10 L578.3 315.76 L579.3 315.64 L580.3 316.70 L581.3 318.91 L582.3 323.08 L583.3 329.72 L584.3 337.52 L585.3 344.45 L586.3 348.58 L587.3 350.38 L588.3 351.20 L589.3 351.75 L590.3 352.35 L591.3 353.18 L592.3 354.30 L593.3 355.56 L594.3 356.77 L595.3 357.74 L596.3 358.41 L597.3 358.79 L598.3 358.99 L599.3 359.09 L600.3 359.15 L601.3 359.22 L602.3 359.31 L603.3 359.39 L604.3 359.45 L605.3 359.54 L606.3 359.77 L607.3 360.34 L608.3 361.65 L609.3 364.21 L610.3 368.85 L611.3 375.98 L612.3 382.67 L613.3 386.26 L614.3 387.69 L615.3 388.28 L616.3 388.56 L617.3 388.70 L618.3 388.71 L619.3 388.61 L620.3 388.46 L621.3 388.28 L622.3 388.11 L623.3 387.99 L624.3 387.93 L625.3 387.98 L626.3 388.12 L627.3 388.33 L628.3 388.58 L629.3 388.81 L630.3 388.99 L631.3 389.06 L632.3 389.01 L633.3 388.81 L634.3 388.35 L635.3 387.31 L636.3 385.24 L637.3 382.19 L638.3 379.14 L639.3 377.04 L640.3 375.88 L641.3 375.25 L642.3 375.01 L643.3 375.32 L644.3 376.33 L645.3 378.04 L646.3 380.66 L647.3 384.78 L648.3 389.45 L649.3 392.62 L650.3 394.28 L651.3 394.91 L652.3 394.47 L653.3 393.05 L654.3 390.88 L655.3 387.76 L656.3 382.83 L657.3 376.58 L658.3 371.63 L659.3 368.89 L660.3 367.37 L661.3 366.24 L662.3 365.22 L663.3 364.25 L664.3 363.13 L665.3 361.48 L666.3 359.29 L667.3 357.14 L668.3 355.60 L669.3 354.67 L670.3 354.06 L671.3 353.49 L672.3 352.75 L673.3 351.69 L674.3 350.34 L675.3 348.94 L676.3 347.68 L677.3 346.56 L678.3 345.70 L679.3 345.37 L680.3 345.79 L681.3 346.95 L682.3 348.76 L683.3 351.63 L684.3 356.27 L685.3 361.60 L686.3 365.44 L687.3 367.62 L688.3 368.95 L689.3 369.66 L690.3 369.71 L691.3 369.14 L692.3 368.20 L693.3 367.14 L694.3 366.09 L695.3 365.03 L696.3 363.96 L697.3 363.08 L698.3 362.62 L699.3 362.71 L700.3 363.27 L701.3 364.09 L702.3 364.97 L703.3 365.85 L704.3 366.79 L705.3 367.72 L706.3 368.39 L707.3 368.37 L708.3 367.12 L709.3 364.02 L710.3 357.37 L711.3 346.09 L712.3 335.54 L713.3 329.02 L714.3 324.53 L715.3 321.23 L716.3 319.46 L717.3 319.59 L718.3 321.47 L719.3 324.60 L720.3 328.82 L721.3 335.42 L722.3 345.83 L723.3 355.19 L724.3 359.78 L725.3 361.70 L726.3 361.76 L727.3 358.81 L728.3 352.20 L729.3 341.73 L730.3 328.60 L731.3 318.06 L732.3 311.64 L733.3 307.38 L734.3 304.84 L735.3 304.62 L736.3 306.84 L737.3 310.98 L738.3 316.92 L739.3 326.20 L740.3 340.25 L741.3 356.87 L742.3 370.17 L743.3 376.02 L744.3 377.55 L745.3 378.18 L746.3 378.88 L747.3 379.81 L748.3 380.81 L749.3 381.69 L750.3 382.38 L751.3 382.92 L752.3 383.28 L753.3 383.38 L754.3 383.13 L755.3 382.42 L756.3 380.82 L757.3 377.90 L758.3 374.73 L759.3 372.65 L760.3 371.38 L761.3 370.41 L762.3 369.74 L762.5 369.30" fill="none" stroke="#419bd2" stroke-width="2.05" stroke-linecap="round" stroke-linejoin="round"/>
</svg>
<div class="r" style="left:398.20000000000005px;top:491.2px;width:179.5px;height:24px;background:#f3f4f6;border-radius:2px"></div>
<div class="r" style="left:588.2px;top:491.2px;width:183.5px;height:24px;background:#f3f4f6;border-radius:2px"></div>
<div class="r" style="left:406.20000000000005px;top:502.2px;width:13px;height:2px;background:#419bd2;border-radius:1px"></div>
<svg style="left:596.2px;top:501.2px" width="16" height="4"><path d="M1 2 L14 2" stroke="#9fcde9" stroke-width="2" stroke-dasharray="0.1 4" stroke-linecap="round"/></svg>
<div class="t" style="left:426.20px;top:498.47px;font-size:11.5px;line-height:11.5px;color:#6b6b6b;font-weight:400;letter-spacing:-0.06px;">Dec 31, 2019–Dec 1, 2023</div>
<div class="t" style="left:616.20px;top:498.47px;font-size:11.5px;line-height:11.5px;color:#6b6b6b;font-weight:400;letter-spacing:-0.06px;">Jan 29, 2016–Dec 30, 2019</div>
<div class="card" style="left:807.33px;top:177px;width:527.33px;height:354px"></div>
<div class="t" style="left:823.83px;top:197.00px;font-size:13px;line-height:13px;color:#616161;font-weight:400;letter-spacing:-0.25px;">Sales by channel</div>
<div class="r" style="left:823.83px;top:212px;width:95px;height:2px;background-image:linear-gradient(90deg,#c4c4c4 50%,transparent 50%);background-size:4px 2px"></div>
<svg style="left:1298.33px;top:195px" width="14" height="16" viewBox="0 0 14 16">
<path d="M2.2 1 L7.6 1 L12 5.4 L12 12.8 C12 13.8 11.3 14.4 10.4 14.4 L2.6 14.4 C1.7 14.4 1 13.8 1 12.8 L1 2.4 C1 1.6 1.5 1 2.2 1 Z" fill="none" stroke="#8a8a8a" stroke-width="1.3" stroke-linejoin="round"/>
<path d="M7.4 1.3 L7.4 5.6 L11.7 5.6" fill="none" stroke="#8a8a8a" stroke-width="1.3"/>
<path d="M4 12.2 L4 10 M6.2 12.2 L6.2 8.6 M8.4 12.2 L8.4 9.6" stroke="#8a8a8a" stroke-width="1.2" stroke-linecap="round"/></svg>
<div class="t" style="left:824.00px;top:221.84px;font-size:12px;line-height:12px;color:#6b6b6b;font-weight:400;letter-spacing:-0.15px;">Online Store</div>
<div class="r" style="left:824px;top:237px;width:367px;height:12px;background:linear-gradient(90deg,#3592cf,#52b4ea);border-radius:0 3px 3px 0"></div>
<div class="t" style="left:1201.00px;top:237.77px;font-size:11.5px;line-height:11.5px;color:#6b6b6b;font-weight:400;letter-spacing:-0.3px;">$3.7M</div>
<svg style="left:1246px;top:238.5px" width="8" height="9" viewBox="0 0 8 9"><path d="M1.5 6.6 L5.7 2.4 M2.5 2.4 L5.7 2.4 L5.7 5.6" fill="none" stroke="#0c7d5b" stroke-width="1.7" stroke-linecap="butt" stroke-linejoin="miter"/></svg>
<div class="t" style="left:1256.00px;top:237.69px;font-size:11px;line-height:11px;color:#0c7d5b;font-weight:400;letter-spacing:-0.35px;">12.7K%</div>
<div class="r" style="left:824px;top:252px;width:2.5px;height:11px;background:#a7d2ee;border-radius:0 1px 1px 0"></div>
<div class="t" style="left:837.50px;top:252.77px;font-size:11.5px;line-height:11.5px;color:#a7d2ee;font-weight:400;letter-spacing:-0.3px;">$29.5K</div>
<div class="t" style="left:824.00px;top:284.84px;font-size:12px;line-height:12px;color:#6b6b6b;font-weight:400;letter-spacing:-0.15px;">Draft Orders</div>
<div class="r" style="left:824px;top:300px;width:57px;height:11.5px;background:linear-gradient(90deg,#3592cf,#3a9ad6);border-radius:0 3px 3px 0"></div>
<div class="t" style="left:891.80px;top:301.07px;font-size:11.5px;line-height:11.5px;color:#6b6b6b;font-weight:400;letter-spacing:-0.3px;">$588.6K</div>
<div class="t" style="left:824.00px;top:348.04px;font-size:12px;line-height:12px;color:#6b6b6b;font-weight:400;letter-spacing:-0.15px;">Shopify Mobile for iPhone</div>
<div class="r" style="left:824px;top:363px;width:13px;height:11.5px;background:#3a98d5;border-radius:0 3px 3px 0"></div>
<div class="t" style="left:847.30px;top:364.27px;font-size:11.5px;line-height:11.5px;color:#6b6b6b;font-weight:400;letter-spacing:-0.3px;">$134K</div>
<div class="t" style="left:824.00px;top:410.34px;font-size:12px;line-height:12px;color:#6b6b6b;font-weight:400;letter-spacing:-0.15px;">Buy Button</div>
<div class="r" style="left:824px;top:425.5px;width:5px;height:11.5px;background:#3a98d5;border-radius:0 2px 2px 0"></div>
<div class="t" style="left:839.30px;top:426.27px;font-size:11.5px;line-height:11.5px;color:#6b6b6b;font-weight:400;letter-spacing:-0.3px;">$52.5K</div>
<div class="t" style="left:824.00px;top:473.34px;font-size:12px;line-height:12px;color:#6b6b6b;font-weight:400;letter-spacing:-0.15px;">Shop</div>
<div class="r" style="left:824px;top:489px;width:1.2px;height:11.5px;background:#3a98d5"></div>
<div class="t" style="left:835.30px;top:489.27px;font-size:11.5px;line-height:11.5px;color:#6b6b6b;font-weight:400;letter-spacing:-0.3px;">$11.5K</div>
<div class="card" style="left:1350.67px;top:177px;width:527.33px;height:354px"></div>
<svg style="left:1366.67px;top:193px" width="131" height="20"><text x="0" y="15.3" font-family="Liberation Sans" font-size="13" fill="#616161" textLength="121" lengthAdjust="spacing">Online store sessions</text></svg>
<div class="r" style="left:1366.67px;top:212px;width:121px;height:2px;background-image:linear-gradient(90deg,#c4c4c4 50%,transparent 50%);background-size:4px 2px"></div>
<svg style="left:1841.67px;top:195px" width="14" height="16" viewBox="0 0 14 16">
<path d="M2.2 1 L7.6 1 L12 5.4 L12 12.8 C12 13.8 11.3 14.4 10.4 14.4 L2.6 14.4 C1.7 14.4 1 13.8 1 12.8 L1 2.4 C1 1.6 1.5 1 2.2 1 Z" fill="none" stroke="#8a8a8a" stroke-width="1.3" stroke-linejoin="round"/>
<path d="M7.4 1.3 L7.4 5.6 L11.7 5.6" fill="none" stroke="#8a8a8a" stroke-width="1.3"/>
<path d="M4 12.2 L4 10 M6.2 12.2 L6.2 8.6 M8.4 12.2 L8.4 9.6" stroke="#8a8a8a" stroke-width="1.2" stroke-linecap="round"/></svg>
<svg style="left:1367.17px;top:215px" width="103.5" height="24"><text x="0" y="18.2" font-family="Liberation Sans" font-weight="400" font-size="20" fill="#303030" stroke="#303030" stroke-width="0.6" textLength="93.5" lengthAdjust="spacing">1,030,040</text></svg>
<svg style="left:1469.67px;top:222.5px" width="8" height="9" viewBox="0 0 8 9"><path d="M1.5 6.6 L5.7 2.4 M2.5 2.4 L5.7 2.4 L5.7 5.6" fill="none" stroke="#0c7d5b" stroke-width="1.7" stroke-linecap="butt" stroke-linejoin="miter"/></svg>
<div class="t" style="left:1479.67px;top:221.19px;font-size:11px;line-height:11px;color:#0c7d5b;font-weight:400;letter-spacing:-0.35px;">11.3K%</div>
<div class="r" style="left:1413.5px;top:257px;width:445.20000000000005px;height:1px;background:#ebebeb"></div>
<div class="t" style="left:1390.50px;top:251.97px;font-size:11.5px;line-height:11.5px;color:#6b6b6b;font-weight:400;transform:translateX(-100%);letter-spacing:-0.3px;">60K</div>
<div class="r" style="left:1413.5px;top:320px;width:445.20000000000005px;height:1px;background:#ebebeb"></div>
<div class="t" style="left:1390.50px;top:314.37px;font-size:11.5px;line-height:11.5px;color:#6b6b6b;font-weight:400;transform:translateX(-100%);letter-spacing:-0.3px;">40K</div>
<div class="r" style="left:1413.5px;top:382px;width:445.20000000000005px;height:1px;background:#ebebeb"></div>
<div class="t" style="left:1390.50px;top:376.47px;font-size:11.5px;line-height:11.5px;color:#6b6b6b;font-weight:400;transform:translateX(-100%);letter-spacing:-0.3px;">20K</div>
<div class="r" style="left:1413.5px;top:444px;width:445.20000000000005px;height:1px;background:#ebebeb"></div>
<div class="t" style="left:1390.50px;top:439.17px;font-size:11.5px;line-height:11.5px;color:#6b6b6b;font-weight:400;transform:translateX(-100%);letter-spacing:-0.3px;">0</div>
<div class="t" style="left:1413.50px;top:460.57px;font-size:11.5px;line-height:11.5px;color:#6b6b6b;font-weight:400;transform:translateX(-50%);letter-spacing:-0.25px;">Jan 2016</div>
<div class="t" style="left:1489.28px;top:460.57px;font-size:11.5px;line-height:11.5px;color:#6b6b6b;font-weight:400;transform:translateX(-50%);letter-spacing:-0.25px;">Sep 2016</div>
<div class="t" style="left:1565.06px;top:460.57px;font-size:11.5px;line-height:11.5px;color:#6b6b6b;font-weight:400;transform:translateX(-50%);letter-spacing:-0.25px;">May 2017</div>
<div class="t" style="left:1640.84px;top:460.57px;font-size:11.5px;line-height:11.5px;color:#6b6b6b;font-weight:400;transform:translateX(-50%);letter-spacing:-0.25px;">Jan 2018</div>
<div class="t" style="left:1716.61px;top:460.57px;font-size:11.5px;line-height:11.5px;color:#6b6b6b;font-weight:400;transform:translateX(-50%);letter-spacing:-0.25px;">Sep 2018</div>
<div class="t" style="left:1792.39px;top:460.57px;font-size:11.5px;line-height:11.5px;color:#6b6b6b;font-weight:400;transform:translateX(-50%);letter-spacing:-0.25px;">May 2019</div>
<svg style="left:0;top:0" width="1903" height="923" viewBox="0 0 1903 923">
<defs><linearGradient id="g2" x1="0" y1="257.7" x2="0" y2="444.9" gradientUnits="userSpaceOnUse"><stop offset="0" stop-color="#419bd2" stop-opacity="0.09"/><stop offset="1" stop-color="#419bd2" stop-opacity="0"/></linearGradient></defs>
<path d="M1413.8 444.40 L1414.8 444.18 L1415.8 443.89 L1416.8 443.59 L1417.8 443.30 L1418.8 443.01 L1419.8 442.74 L1420.8 442.51 L1421.8 442.36 L1422.8 442.28 L1423.8 442.25 L1424.8 442.22 L1425.8 442.15 L1426.8 442.03 L1427.8 441.85 L1428.8 441.63 L1429.8 441.40 L1430.8 441.18 L1431.8 441.00 L1432.8 440.87 L1433.8 440.78 L1434.8 440.70 L1435.8 440.62 L1436.8 440.51 L1437.8 440.38 L1438.8 440.24 L1439.8 440.09 L1440.8 439.92 L1441.8 439.71 L1442.8 439.39 L1443.8 438.90 L1444.8 438.13 L1445.8 437.09 L1446.8 435.97 L1447.8 434.97 L1448.8 434.13 L1449.8 433.49 L1450.8 433.09 L1451.8 432.84 L1452.8 432.58 L1453.8 432.10 L1454.8 431.14 L1455.8 429.61 L1456.8 427.98 L1457.8 426.79 L1458.8 426.09 L1459.8 425.70 L1460.8 425.59 L1461.8 425.81 L1462.8 426.34 L1463.8 427.06 L1464.8 427.78 L1465.8 428.40 L1466.8 428.96 L1467.8 429.46 L1468.8 429.91 L1469.8 430.27 L1470.8 430.55 L1471.8 430.76 L1472.8 430.92 L1473.8 431.05 L1474.8 431.18 L1475.8 431.33 L1476.8 431.50 L1477.8 431.66 L1478.8 431.77 L1479.8 431.79 L1480.8 431.67 L1481.8 431.35 L1482.8 430.81 L1483.8 430.14 L1484.8 429.44 L1485.8 428.85 L1486.8 428.43 L1487.8 428.14 L1488.8 427.93 L1489.8 427.71 L1490.8 427.39 L1491.8 426.91 L1492.8 426.23 L1493.8 425.42 L1494.8 424.59 L1495.8 423.89 L1496.8 423.40 L1497.8 423.12 L1498.8 422.99 L1499.8 422.96 L1500.8 423.02 L1501.8 423.16 L1502.8 423.38 L1503.8 423.66 L1504.8 423.92 L1505.8 424.14 L1506.8 424.30 L1507.8 424.45 L1508.8 424.51 L1509.8 424.34 L1510.8 423.63 L1511.8 422.01 L1512.8 419.72 L1513.8 417.69 L1514.8 416.26 L1515.8 415.26 L1516.8 414.69 L1517.8 414.75 L1518.8 415.49 L1519.8 416.73 L1520.8 418.22 L1521.8 419.79 L1522.8 421.51 L1523.8 423.39 L1524.8 425.11 L1525.8 426.27 L1526.8 426.74 L1527.8 426.68 L1528.8 426.33 L1529.8 425.87 L1530.8 425.41 L1531.8 424.93 L1532.8 424.42 L1533.8 423.91 L1534.8 423.50 L1535.8 423.24 L1536.8 423.06 L1537.8 422.68 L1538.8 421.55 L1539.8 419.10 L1540.8 415.40 L1541.8 411.13 L1542.8 407.10 L1543.8 404.28 L1544.8 402.56 L1545.8 401.30 L1546.8 399.99 L1547.8 397.81 L1548.8 392.94 L1549.8 383.84 L1550.8 372.05 L1551.8 361.30 L1552.8 354.25 L1553.8 350.97 L1554.8 349.59 L1555.8 348.72 L1556.8 347.74 L1557.8 346.08 L1558.8 343.46 L1559.8 340.45 L1560.8 338.03 L1561.8 336.34 L1562.8 335.04 L1563.8 334.07 L1564.8 333.57 L1565.8 333.74 L1566.8 334.63 L1567.8 336.10 L1568.8 338.13 L1569.8 341.02 L1570.8 344.38 L1571.8 346.97 L1572.8 348.39 L1573.8 349.12 L1574.8 349.62 L1575.8 350.18 L1576.8 351.05 L1577.8 352.33 L1578.8 353.89 L1579.8 355.49 L1580.8 357.08 L1581.8 358.69 L1582.8 360.09 L1583.8 360.95 L1584.8 360.96 L1585.8 360.08 L1586.8 358.53 L1587.8 356.38 L1588.8 353.29 L1589.8 349.56 L1590.8 346.59 L1591.8 344.98 L1592.8 344.28 L1593.8 344.26 L1594.8 345.01 L1595.8 346.53 L1596.8 348.85 L1597.8 352.78 L1598.8 359.02 L1599.8 365.06 L1600.8 368.41 L1601.8 369.81 L1602.8 370.53 L1603.8 371.17 L1604.8 371.97 L1605.8 372.92 L1606.8 373.95 L1607.8 375.11 L1608.8 376.46 L1609.8 377.92 L1610.8 379.14 L1611.8 379.82 L1612.8 379.88 L1613.8 379.44 L1614.8 378.73 L1615.8 377.90 L1616.8 376.97 L1617.8 375.88 L1618.8 374.77 L1619.8 373.91 L1620.8 373.47 L1621.8 373.41 L1622.8 373.74 L1623.8 374.84 L1624.8 377.39 L1625.8 381.16 L1626.8 384.66 L1627.8 387.17 L1628.8 389.00 L1629.8 390.21 L1630.8 390.80 L1631.8 390.93 L1632.8 390.80 L1633.8 390.56 L1634.8 390.30 L1635.8 390.09 L1636.8 389.96 L1637.8 389.87 L1638.8 389.77 L1639.8 389.62 L1640.8 389.34 L1641.8 388.80 L1642.8 387.59 L1643.8 384.75 L1644.8 379.71 L1645.8 374.70 L1646.8 371.79 L1647.8 370.24 L1648.8 369.28 L1649.8 368.69 L1650.8 368.23 L1651.8 367.58 L1652.8 366.46 L1653.8 364.90 L1654.8 363.37 L1655.8 362.24 L1656.8 361.45 L1657.8 360.88 L1658.8 360.48 L1659.8 360.27 L1660.8 360.26 L1661.8 360.44 L1662.8 360.72 L1663.8 361.03 L1664.8 361.33 L1665.8 361.61 L1666.8 361.88 L1667.8 362.15 L1668.8 362.42 L1669.8 362.69 L1670.8 362.96 L1671.8 363.23 L1672.8 363.50 L1673.8 363.75 L1674.8 363.98 L1675.8 364.19 L1676.8 364.42 L1677.8 364.61 L1678.8 364.63 L1679.8 364.23 L1680.8 363.04 L1681.8 361.10 L1682.8 359.20 L1683.8 357.87 L1684.8 356.93 L1685.8 356.23 L1686.8 355.77 L1687.8 355.62 L1688.8 355.82 L1689.8 356.30 L1690.8 356.91 L1691.8 357.54 L1692.8 358.20 L1693.8 358.91 L1694.8 359.55 L1695.8 360.00 L1696.8 360.16 L1697.8 360.04 L1698.8 359.70 L1699.8 359.15 L1700.8 358.33 L1701.8 357.28 L1702.8 356.19 L1703.8 355.26 L1704.8 354.59 L1705.8 354.11 L1706.8 353.65 L1707.8 352.98 L1708.8 351.77 L1709.8 349.82 L1710.8 347.42 L1711.8 345.24 L1712.8 343.47 L1713.8 342.04 L1714.8 341.06 L1715.8 340.58 L1716.8 340.50 L1717.8 340.64 L1718.8 340.89 L1719.8 341.18 L1720.8 341.53 L1721.8 341.94 L1722.8 342.37 L1723.8 342.74 L1724.8 343.02 L1725.8 343.24 L1726.8 343.44 L1727.8 343.66 L1728.8 343.96 L1729.8 344.38 L1730.8 344.94 L1731.8 345.58 L1732.8 346.19 L1733.8 346.69 L1734.8 347.03 L1735.8 347.28 L1736.8 347.53 L1737.8 347.88 L1738.8 348.41 L1739.8 349.11 L1740.8 349.83 L1741.8 350.42 L1742.8 350.80 L1743.8 351.00 L1744.8 350.95 L1745.8 350.38 L1746.8 348.80 L1747.8 345.93 L1748.8 342.43 L1749.8 339.12 L1750.8 336.13 L1751.8 333.71 L1752.8 332.17 L1753.8 331.40 L1754.8 330.95 L1755.8 330.31 L1756.8 328.92 L1757.8 326.54 L1758.8 323.74 L1759.8 321.35 L1760.8 319.41 L1761.8 317.73 L1762.8 316.46 L1763.8 315.83 L1764.8 316.05 L1765.8 317.07 L1766.8 318.82 L1767.8 321.79 L1768.8 326.84 L1769.8 332.58 L1770.8 336.42 L1771.8 338.37 L1772.8 339.47 L1773.8 340.00 L1774.8 339.72 L1775.8 338.38 L1776.8 336.18 L1777.8 333.61 L1778.8 330.77 L1779.8 327.90 L1780.8 325.71 L1781.8 324.41 L1782.8 323.72 L1783.8 323.26 L1784.8 322.80 L1785.8 322.17 L1786.8 321.31 L1787.8 320.32 L1788.8 319.29 L1789.8 318.24 L1790.8 317.21 L1791.8 316.45 L1792.8 316.32 L1793.8 317.00 L1794.8 318.42 L1795.8 320.68 L1796.8 324.66 L1797.8 330.59 L1798.8 335.95 L1799.8 338.98 L1800.8 340.42 L1801.8 341.35 L1802.8 342.40 L1803.8 344.35 L1804.8 348.64 L1805.8 356.77 L1806.8 368.06 L1807.8 381.04 L1808.8 392.98 L1809.8 401.54 L1810.8 406.52 L1811.8 407.54 L1812.8 405.16 L1813.8 400.57 L1814.8 393.11 L1815.8 381.34 L1816.8 368.69 L1817.8 359.62 L1818.8 353.47 L1819.8 349.42 L1820.8 347.42 L1821.8 346.92 L1822.8 347.29 L1823.8 348.03 L1824.8 348.84 L1825.8 349.57 L1826.8 350.24 L1827.8 350.87 L1828.8 351.40 L1829.8 351.67 L1830.8 351.53 L1831.8 350.93 L1832.8 349.95 L1833.8 348.74 L1834.8 347.44 L1835.8 346.05 L1836.8 344.54 L1837.8 343.02 L1838.8 341.72 L1839.8 340.73 L1840.8 339.86 L1841.8 338.62 L1842.8 335.81 L1843.8 329.00 L1844.8 318.02 L1845.8 308.06 L1846.8 301.96 L1847.8 298.89 L1848.8 297.27 L1849.4 296.20 L1849.4 444.9 L1413.8 444.9 Z" fill="url(#g2)"/>
<path d="M1413.5 445.00 L1414.5 445.00 L1415.5 445.00 L1416.5 445.00 L1417.5 445.00 L1418.5 445.00 L1419.5 445.00 L1420.5 445.00 L1421.5 445.00 L1422.5 445.00 L1423.5 445.00 L1424.5 445.00 L1425.5 445.00 L1426.5 445.00 L1427.5 445.00 L1428.5 445.00 L1429.5 444.99 L1430.5 444.99 L1431.5 444.99 L1432.5 444.99 L1433.5 444.99 L1434.5 444.99 L1435.5 444.99 L1436.5 444.99 L1437.5 444.99 L1438.5 444.99 L1439.5 444.99 L1440.5 444.99 L1441.5 444.99 L1442.5 444.99 L1443.5 444.99 L1444.5 444.99 L1445.5 444.99 L1446.5 444.99 L1447.5 444.99 L1448.5 444.99 L1449.5 444.99 L1450.5 444.99 L1451.5 444.99 L1452.5 444.99 L1453.5 444.99 L1454.5 444.99 L1455.5 444.99 L1456.5 444.99 L1457.5 444.99 L1458.5 444.99 L1459.5 444.99 L1460.5 444.99 L1461.5 444.98 L1462.5 444.98 L1463.5 444.98 L1464.5 444.98 L1465.5 444.98 L1466.5 444.98 L1467.5 444.98 L1468.5 444.98 L1469.5 444.98 L1470.5 444.98 L1471.5 444.98 L1472.5 444.98 L1473.5 444.98 L1474.5 444.98 L1475.5 444.98 L1476.5 444.98 L1477.5 444.98 L1478.5 444.98 L1479.5 444.98 L1480.5 444.98 L1481.5 444.98 L1482.5 444.98 L1483.5 444.98 L1484.5 444.98 L1485.5 444.98 L1486.5 444.98 L1487.5 444.98 L1488.5 444.98 L1489.5 444.98 L1490.5 444.98 L1491.5 444.98 L1492.5 444.98 L1493.5 444.97 L1494.5 444.97 L1495.5 444.97 L1496.5 444.97 L1497.5 444.97 L1498.5 444.97 L1499.5 444.97 L1500.5 444.97 L1501.5 444.97 L1502.5 444.97 L1503.5 444.97 L1504.5 444.97 L1505.5 444.97 L1506.5 444.97 L1507.5 444.97 L1508.5 444.97 L1509.5 444.97 L1510.5 444.97 L1511.5 444.97 L1512.5 444.97 L1513.5 444.97 L1514.5 444.97 L1515.5 444.97 L1516.5 444.97 L1517.5 444.97 L1518.5 444.97 L1519.5 444.97 L1520.5 444.97 L1521.5 444.97 L1522.5 444.97 L1523.5 444.97 L1524.5 444.97 L1525.5 444.96 L1526.5 444.96 L1527.5 444.96 L1528.5 444.96 L1529.5 444.96 L1530.5 444.96 L1531.5 444.96 L1532.5 444.96 L1533.5 444.96 L1534.5 444.96 L1535.5 444.96 L1536.5 444.96 L1537.5 444.96 L1538.5 444.96 L1539.5 444.96 L1540.5 444.96 L1541.5 444.96 L1542.5 444.96 L1543.5 444.96 L1544.5 444.96 L1545.5 444.96 L1546.5 444.96 L1547.5 444.96 L1548.5 444.96 L1549.5 444.96 L1550.5 444.96 L1551.5 444.96 L1552.5 444.96 L1553.5 444.96 L1554.5 444.96 L1555.5 444.96 L1556.5 444.96 L1557.5 444.95 L1558.5 444.95 L1559.5 444.95 L1560.5 444.95 L1561.5 444.95 L1562.5 444.95 L1563.5 444.95 L1564.5 444.95 L1565.5 444.95 L1566.5 444.95 L1567.5 444.95 L1568.5 444.95 L1569.5 444.95 L1570.5 444.95 L1571.5 444.95 L1572.5 444.95 L1573.5 444.95 L1574.5 444.95 L1575.5 444.95 L1576.5 444.95 L1577.5 444.95 L1578.5 444.95 L1579.5 444.95 L1580.5 444.95 L1581.5 444.95 L1582.5 444.95 L1583.5 444.95 L1584.5 444.95 L1585.5 444.95 L1586.5 444.95 L1587.5 444.95 L1588.5 444.95 L1589.5 444.94 L1590.5 444.94 L1591.5 444.94 L1592.5 444.94 L1593.5 444.94 L1594.5 444.94 L1595.5 444.94 L1596.5 444.94 L1597.5 444.94 L1598.5 444.94 L1599.5 444.94 L1600.5 444.94 L1601.5 444.94 L1602.5 444.94 L1603.5 444.94 L1604.5 444.94 L1605.5 444.94 L1606.5 444.94 L1607.5 444.94 L1608.5 444.94 L1609.5 444.94 L1610.5 444.94 L1611.5 444.94 L1612.5 444.94 L1613.5 444.94 L1614.5 444.94 L1615.5 444.94 L1616.5 444.94 L1617.5 444.94 L1618.5 444.94 L1619.5 444.94 L1620.5 444.93 L1621.5 444.93 L1622.5 444.93 L1623.5 444.93 L1624.5 444.93 L1625.5 444.93 L1626.5 444.93 L1627.5 444.93 L1628.5 444.93 L1629.5 444.93 L1630.5 444.93 L1631.5 444.93 L1632.5 444.93 L1633.5 444.93 L1634.5 444.93 L1635.5 444.93 L1636.5 444.93 L1637.5 444.93 L1638.5 444.93 L1639.5 444.93 L1640.5 444.93 L1641.5 444.93 L1642.5 444.93 L1643.5 444.93 L1644.5 444.93 L1645.5 444.93 L1646.5 444.93 L1647.5 444.93 L1648.5 444.93 L1649.5 444.93 L1650.5 444.93 L1651.5 444.93 L1652.5 444.92 L1653.5 444.92 L1654.5 444.92 L1655.5 444.92 L1656.5 444.92 L1657.5 444.92 L1658.5 444.92 L1659.5 444.92 L1660.5 444.92 L1661.5 444.92 L1662.5 444.92 L1663.5 444.92 L1664.5 444.92 L1665.5 444.92 L1666.5 444.92 L1667.5 444.92 L1668.5 444.92 L1669.5 444.92 L1670.5 444.92 L1671.5 444.92 L1672.5 444.92 L1673.5 444.92 L1674.5 444.92 L1675.5 444.92 L1676.5 444.92 L1677.5 444.92 L1678.5 444.92 L1679.5 444.92 L1680.5 444.92 L1681.5 444.92 L1682.5 444.92 L1683.5 444.92 L1684.5 444.91 L1685.5 444.91 L1686.5 444.91 L1687.5 444.91 L1688.5 444.91 L1689.5 444.91 L1690.5 444.91 L1691.5 444.91 L1692.5 444.91 L1693.5 444.91 L1694.5 444.91 L1695.5 444.91 L1696.5 444.91 L1697.5 444.91 L1698.5 444.91 L1699.5 444.91 L1700.5 444.91 L1701.5 444.91 L1702.5 444.91 L1703.5 444.91 L1704.5 444.91 L1705.5 444.91 L1706.5 444.91 L1707.5 444.91 L1708.5 444.91 L1709.5 444.91 L1710.5 444.91 L1711.5 444.91 L1712.5 444.91 L1713.5 444.91 L1714.5 444.91 L1715.5 444.91 L1716.5 444.90 L1717.5 444.90 L1718.5 444.90 L1719.5 444.90 L1720.5 444.90 L1721.5 444.90 L1722.5 444.90 L1723.5 444.91 L1724.5 444.92 L1725.5 444.95 L1726.5 444.98 L1727.5 445.02 L1728.5 445.04 L1729.5 445.03 L1730.5 444.99 L1731.5 444.92 L1732.5 444.81 L1733.5 444.69 L1734.5 444.55 L1735.5 444.39 L1736.5 444.22 L1737.5 444.03 L1738.5 443.83 L1739.5 443.61 L1740.5 443.38 L1741.5 443.12 L1742.5 442.83 L1743.5 442.52 L1744.5 442.17 L1745.5 441.75 L1746.5 441.22 L1747.5 440.59 L1748.5 439.87 L1749.5 439.11 L1750.5 438.35 L1751.5 437.64 L1752.5 437.04 L1753.5 436.61 L1754.5 436.40 L1755.5 436.49 L1756.5 436.92 L1757.5 437.66 L1758.5 438.61 L1759.5 439.65 L1760.5 440.64 L1761.5 441.46 L1762.5 442.04 L1763.5 442.34 L1764.5 442.45 L1765.5 442.41 L1766.5 442.28 L1767.5 442.09 L1768.5 441.87 L1769.5 441.63 L1770.5 441.40 L1771.5 441.21 L1772.5 441.08 L1773.5 441.02 L1774.5 441.04 L1775.5 441.11 L1776.5 441.22 L1777.5 441.36 L1778.5 441.52 L1779.5 441.68 L1780.5 441.83 L1781.5 441.97 L1782.5 442.10 L1783.5 442.24 L1784.5 442.37 L1785.5 442.51 L1786.5 442.64 L1787.5 442.76 L1788.5 442.87 L1789.5 442.96 L1790.5 443.02 L1791.5 443.06 L1792.5 443.09 L1793.5 443.10 L1794.5 443.09 L1795.5 443.09 L1796.5 443.08 L1797.5 443.07 L1798.5 443.08 L1799.5 443.08 L1800.5 443.09 L1801.5 443.10 L1802.5 443.11 L1803.5 443.12 L1804.5 443.13 L1805.5 443.14 L1806.5 443.14 L1807.5 443.15 L1808.5 443.16 L1809.5 443.17 L1810.5 443.18 L1811.5 443.19 L1812.5 443.20 L1813.5 443.21 L1814.5 443.21 L1815.5 443.22 L1816.5 443.23 L1817.5 443.24 L1818.5 443.25 L1819.5 443.26 L1820.5 443.27 L1821.5 443.28 L1822.5 443.28 L1823.5 443.29 L1824.5 443.30 L1825.5 443.31 L1826.5 443.32 L1827.5 443.33 L1828.5 443.34 L1829.5 443.34 L1830.5 443.35 L1831.5 443.36 L1832.5 443.37 L1833.5 443.38 L1834.5 443.39 L1835.5 443.40 L1836.5 443.41 L1837.5 443.41 L1838.5 443.42 L1839.5 443.43 L1840.5 443.44 L1841.5 443.45 L1842.5 443.46 L1843.5 443.47 L1844.5 443.48 L1845.5 443.48 L1846.5 443.49 L1847.5 443.50 L1848.5 443.51 L1849.5 443.52 L1850.5 443.53 L1851.5 443.54 L1852.5 443.55 L1853.5 443.55 L1854.5 443.56 L1855.5 443.57 L1856.5 443.58 L1857.5 443.59 L1858.5 443.60 L1858.7 443.60" fill="none" stroke="#9fcde9" stroke-width="2" stroke-dasharray="0.1 4" stroke-linecap="round"/>
<path d="M1413.8 444.40 L1414.8 444.18 L1415.8 443.89 L1416.8 443.59 L1417.8 443.30 L1418.8 443.01 L1419.8 442.74 L1420.8 442.51 L1421.8 442.36 L1422.8 442.28 L1423.8 442.25 L1424.8 442.22 L1425.8 442.15 L1426.8 442.03 L1427.8 441.85 L1428.8 441.63 L1429.8 441.40 L1430.8 441.18 L1431.8 441.00 L1432.8 440.87 L1433.8 440.78 L1434.8 440.70 L1435.8 440.62 L1436.8 440.51 L1437.8 440.38 L1438.8 440.24 L1439.8 440.09 L1440.8 439.92 L1441.8 439.71 L1442.8 439.39 L1443.8 438.90 L1444.8 438.13 L1445.8 437.09 L1446.8 435.97 L1447.8 434.97 L1448.8 434.13 L1449.8 433.49 L1450.8 433.09 L1451.8 432.84 L1452.8 432.58 L1453.8 432.10 L1454.8 431.14 L1455.8 429.61 L1456.8 427.98 L1457.8 426.79 L1458.8 426.09 L1459.8 425.70 L1460.8 425.59 L1461.8 425.81 L1462.8 426.34 L1463.8 427.06 L1464.8 427.78 L1465.8 428.40 L1466.8 428.96 L1467.8 429.46 L1468.8 429.91 L1469.8 430.27 L1470.8 430.55 L1471.8 430.76 L1472.8 430.92 L1473.8 431.05 L1474.8 431.18 L1475.8 431.33 L1476.8 431.50 L1477.8 431.66 L1478.8 431.77 L1479.8 431.79 L1480.8 431.67 L1481.8 431.35 L1482.8 430.81 L1483.8 430.14 L1484.8 429.44 L1485.8 428.85 L1486.8 428.43 L1487.8 428.14 L1488.8 427.93 L1489.8 427.71 L1490.8 427.39 L1491.8 426.91 L1492.8 426.23 L1493.8 425.42 L1494.8 424.59 L1495.8 423.89 L1496.8 423.40 L1497.8 423.12 L1498.8 422.99 L1499.8 422.96 L1500.8 423.02 L1501.8 423.16 L1502.8 423.38 L1503.8 423.66 L1504.8 423.92 L1505.8 424.14 L1506.8 424.30 L1507.8 424.45 L1508.8 424.51 L1509.8 424.34 L1510.8 423.63 L1511.8 422.01 L1512.8 419.72 L1513.8 417.69 L1514.8 416.26 L1515.8 415.26 L1516.8 414.69 L1517.8 414.75 L1518.8 415.49 L1519.8 416.73 L1520.8 418.22 L1521.8 419.79 L1522.8 421.51 L1523.8 423.39 L1524.8 425.11 L1525.8 426.27 L1526.8 426.74 L1527.8 426.68 L1528.8 426.33 L1529.8 425.87 L1530.8 425.41 L1531.8 424.93 L1532.8 424.42 L1533.8 423.91 L1534.8 423.50 L1535.8 423.24 L1536.8 423.06 L1537.8 422.68 L1538.8 421.55 L1539.8 419.10 L1540.8 415.40 L1541.8 411.13 L1542.8 407.10 L1543.8 404.28 L1544.8 402.56 L1545.8 401.30 L1546.8 399.99 L1547.8 397.81 L1548.8 392.94 L1549.8 383.84 L1550.8 372.05 L1551.8 361.30 L1552.8 354.25 L1553.8 350.97 L1554.8 349.59 L1555.8 348.72 L1556.8 347.74 L1557.8 346.08 L1558.8 343.46 L1559.8 340.45 L1560.8 338.03 L1561.8 336.34 L1562.8 335.04 L1563.8 334.07 L1564.8 333.57 L1565.8 333.74 L1566.8 334.63 L1567.8 336.10 L1568.8 338.13 L1569.8 341.02 L1570.8 344.38 L1571.8 346.97 L1572.8 348.39 L1573.8 349.12 L1574.8 349.62 L1575.8 350.18 L1576.8 351.05 L1577.8 352.33 L1578.8 353.89 L1579.8 355.49 L1580.8 357.08 L1581.8 358.69 L1582.8 360.09 L1583.8 360.95 L1584.8 360.96 L1585.8 360.08 L1586.8 358.53 L1587.8 356.38 L1588.8 353.29 L1589.8 349.56 L1590.8 346.59 L1591.8 344.98 L1592.8 344.28 L1593.8 344.26 L1594.8 345.01 L1595.8 346.53 L1596.8 348.85 L1597.8 352.78 L1598.8 359.02 L1599.8 365.06 L1600.8 368.41 L1601.8 369.81 L1602.8 370.53 L1603.8 371.17 L1604.8 371.97 L1605.8 372.92 L1606.8 373.95 L1607.8 375.11 L1608.8 376.46 L1609.8 377.92 L1610.8 379.14 L1611.8 379.82 L1612.8 379.88 L1613.8 379.44 L1614.8 378.73 L1615.8 377.90 L1616.8 376.97 L1617.8 375.88 L1618.8 374.77 L1619.8 373.91 L1620.8 373.47 L1621.8 373.41 L1622.8 373.74 L1623.8 374.84 L1624.8 377.39 L1625.8 381.16 L1626.8 384.66 L1627.8 387.17 L1628.8 389.00 L1629.8 390.21 L1630.8 390.80 L1631.8 390.93 L1632.8 390.80 L1633.8 390.56 L1634.8 390.30 L1635.8 390.09 L1636.8 389.96 L1637.8 389.87 L1638.8 389.77 L1639.8 389.62 L1640.8 389.34 L1641.8 388.80 L1642.8 387.59 L1643.8 384.75 L1644.8 379.71 L1645.8 374.70 L1646.8 371.79 L1647.8 370.24 L1648.8 369.28 L1649.8 368.69 L1650.8 368.23 L1651.8 367.58 L1652.8 366.46 L1653.8 364.90 L1654.8 363.37 L1655.8 362.24 L1656.8 361.45 L1657.8 360.88 L1658.8 360.48 L1659.8 360.27 L1660.8 360.26 L1661.8 360.44 L1662.8 360.72 L1663.8 361.03 L1664.8 361.33 L1665.8 361.61 L1666.8 361.88 L1667.8 362.15 L1668.8 362.42 L1669.8 362.69 L1670.8 362.96 L1671.8 363.23 L1672.8 363.50 L1673.8 363.75 L1674.8 363.98 L1675.8 364.19 L1676.8 364.42 L1677.8 364.61 L1678.8 364.63 L1679.8 364.23 L1680.8 363.04 L1681.8 361.10 L1682.8 359.20 L1683.8 357.87 L1684.8 356.93 L1685.8 356.23 L1686.8 355.77 L1687.8 355.62 L1688.8 355.82 L1689.8 356.30 L1690.8 356.91 L1691.8 357.54 L1692.8 358.20 L1693.8 358.91 L1694.8 359.55 L1695.8 360.00 L1696.8 360.16 L1697.8 360.04 L1698.8 359.70 L1699.8 359.15 L1700.8 358.33 L1701.8 357.28 L1702.8 356.19 L1703.8 355.26 L1704.8 354.59 L1705.8 354.11 L1706.8 353.65 L1707.8 352.98 L1708.8 351.77 L1709.8 349.82 L1710.8 347.42 L1711.8 345.24 L1712.8 343.47 L1713.8 342.04 L1714.8 341.06 L1715.8 340.58 L1716.8 340.50 L1717.8 340.64 L1718.8 340.89 L1719.8 341.18 L1720.8 341.53 L1721.8 341.94 L1722.8 342.37 L1723.8 342.74 L1724.8 343.02 L1725.8 343.24 L1726.8 343.44 L1727.8 343.66 L1728.8 343.96 L1729.8 344.38 L1730.8 344.94 L1731.8 345.58 L1732.8 346.19 L1733.8 346.69 L1734.8 347.03 L1735.8 347.28 L1736.8 347.53 L1737.8 347.88 L1738.8 348.41 L1739.8 349.11 L1740.8 349.83 L1741.8 350.42 L1742.8 350.80 L1743.8 351.00 L1744.8 350.95 L1745.8 350.38 L1746.8 348.80 L1747.8 345.93 L1748.8 342.43 L1749.8 339.12 L1750.8 336.13 L1751.8 333.71 L1752.8 332.17 L1753.8 331.40 L1754.8 330.95 L1755.8 330.31 L1756.8 328.92 L1757.8 326.54 L1758.8 323.74 L1759.8 321.35 L1760.8 319.41 L1761.8 317.73 L1762.8 316.46 L1763.8 315.83 L1764.8 316.05 L1765.8 317.07 L1766.8 318.82 L1767.8 321.79 L1768.8 326.84 L1769.8 332.58 L1770.8 336.42 L1771.8 338.37 L1772.8 339.47 L1773.8 340.00 L1774.8 339.72 L1775.8 338.38 L1776.8 336.18 L1777.8 333.61 L1778.8 330.77 L1779.8 327.90 L1780.8 325.71 L1781.8 324.41 L1782.8 323.72 L1783.8 323.26 L1784.8 322.80 L1785.8 322.17 L1786.8 321.31 L1787.8 320.32 L1788.8 319.29 L1789.8 318.24 L1790.8 317.21 L1791.8 316.45 L1792.8 316.32 L1793.8 317.00 L1794.8 318.42 L1795.8 320.68 L1796.8 324.66 L1797.8 330.59 L1798.8 335.95 L1799.8 338.98 L1800.8 340.42 L1801.8 341.35 L1802.8 342.40 L1803.8 344.35 L1804.8 348.64 L1805.8 356.77 L1806.8 368.06 L1807.8 381.04 L1808.8 392.98 L1809.8 401.54 L1810.8 406.52 L1811.8 407.54 L1812.8 405.16 L1813.8 400.57 L1814.8 393.11 L1815.8 381.34 L1816.8 368.69 L1817.8 359.62 L1818.8 353.47 L1819.8 349.42 L1820.8 347.42 L1821.8 346.92 L1822.8 347.29 L1823.8 348.03 L1824.8 348.84 L1825.8 349.57 L1826.8 350.24 L1827.8 350.87 L1828.8 351.40 L1829.8 351.67 L1830.8 351.53 L1831.8 350.93 L1832.8 349.95 L1833.8 348.74 L1834.8 347.44 L1835.8 346.05 L1836.8 344.54 L1837.8 343.02 L1838.8 341.72 L1839.8 340.73 L1840.8 339.86 L1841.8 338.62 L1842.8 335.81 L1843.8 329.00 L1844.8 318.02 L1845.8 308.06 L1846.8 301.96 L1847.8 298.89 L1848.8 297.27 L1849.4 296.20" fill="none" stroke="#419bd2" stroke-width="2.05" stroke-linecap="round" stroke-linejoin="round"/>
</svg>
<div class="r" style="left:1485.7px;top:490.9px;width:179.5px;height:24px;background:#f3f4f6;border-radius:2px"></div>
<div class="r" style="left:1675.7px;top:490.9px;width:183.5px;height:24px;background:#f3f4f6;border-radius:2px"></div>
<div class="r" style="left:1493.7px;top:501.9px;width:13px;height:2px;background:#419bd2;border-radius:1px"></div>
<svg style="left:1683.7px;top:500.9px" width="16" height="4"><path d="M1 2 L14 2" stroke="#9fcde9" stroke-width="2" stroke-dasharray="0.1 4" stroke-linecap="round"/></svg>
<div class="t" style="left:1513.70px;top:498.17px;font-size:11.5px;line-height:11.5px;color:#6b6b6b;font-weight:400;letter-spacing:-0.06px;">Dec 31, 2019–Dec 1, 2023</div>
<div class="t" style="left:1703.70px;top:498.17px;font-size:11.5px;line-height:11.5px;color:#6b6b6b;font-weight:400;letter-spacing:-0.06px;">Jan 29, 2016–Dec 30, 2019</div>
<div class="card" style="left:264px;top:547px;width:527.33px;height:354px"></div>
<svg style="left:280px;top:563px" width="169.3" height="20"><text x="0" y="15.3" font-family="Liberation Sans" font-size="13" fill="#616161" textLength="159.3" lengthAdjust="spacing">Online store conversion rate</text></svg>
<div class="r" style="left:280px;top:582px;width:159.3px;height:2px;background-image:linear-gradient(90deg,#c4c4c4 50%,transparent 50%);background-size:4px 2px"></div>
<svg style="left:755px;top:565px" width="14" height="16" viewBox="0 0 14 16">
<path d="M2.2 1 L7.6 1 L12 5.4 L12 12.8 C12 13.8 11.3 14.4 10.4 14.4 L2.6 14.4 C1.7 14.4 1 13.8 1 12.8 L1 2.4 C1 1.6 1.5 1 2.2 1 Z" fill="none" stroke="#8a8a8a" stroke-width="1.3" stroke-linejoin="round"/>
<path d="M7.4 1.3 L7.4 5.6 L11.7 5.6" fill="none" stroke="#8a8a8a" stroke-width="1.3"/>
<path d="M4 12.2 L4 10 M6.2 12.2 L6.2 8.6 M8.4 12.2 L8.4 9.6" stroke="#8a8a8a" stroke-width="1.2" stroke-linecap="round"/></svg>
<svg style="left:280.5px;top:585px" width="64" height="24"><text x="0" y="18.2" font-family="Liberation Sans" font-weight="400" font-size="20" fill="#303030" stroke="#303030" stroke-width="0.6" textLength="54" lengthAdjust="spacing">0.19%</text></svg>
<svg style="left:343.5px;top:592.5px" width="8" height="9" viewBox="0 0 8 9"><path d="M1.5 2.4 L5.7 6.6 M2.5 6.6 L5.7 6.6 L5.7 3.4" fill="none" stroke="#c70a24" stroke-width="1.7" stroke-linecap="butt" stroke-linejoin="miter"/></svg>
<div class="t" style="left:353.50px;top:591.19px;font-size:11px;line-height:11px;color:#c70a24;font-weight:400;letter-spacing:-0.35px;">25%</div>
<div class="t" style="left:280.50px;top:638.90px;font-size:13px;line-height:13px;color:#616161;font-weight:400;letter-spacing:0.5px;">Added to cart</div>
<div class="t" style="left:280.50px;top:658.90px;font-size:13px;line-height:13px;color:#616161;font-weight:400;letter-spacing:0.15px;">8,013 sessions</div>
<div class="t" style="left:666.00px;top:649.40px;font-size:13px;line-height:13px;color:#616161;font-weight:400;transform:translateX(-100%);letter-spacing:0.1px;">0.78%</div>
<svg style="left:741px;top:651.9px" width="8" height="9" viewBox="0 0 8 9"><path d="M1.5 2.4 L5.7 6.6 M2.5 6.6 L5.7 6.6 L5.7 3.4" fill="none" stroke="#c70a24" stroke-width="1.7" stroke-linecap="butt" stroke-linejoin="miter"/></svg>
<div class="t" style="left:772.00px;top:651.09px;font-size:11px;line-height:11px;color:#c70a24;font-weight:400;transform:translateX(-100%);letter-spacing:-0.3px;">52%</div>
<div class="r" style="left:265px;top:688px;width:525.33px;height:1px;background:#e3e3e3"></div>
<div class="t" style="left:280.50px;top:703.90px;font-size:13px;line-height:13px;color:#616161;font-weight:400;letter-spacing:0.31px;">Reached checkout</div>
<div class="t" style="left:280.50px;top:723.90px;font-size:13px;line-height:13px;color:#616161;font-weight:400;letter-spacing:0.3px;">4,909 sessions</div>
<div class="t" style="left:666.00px;top:714.40px;font-size:13px;line-height:13px;color:#616161;font-weight:400;transform:translateX(-100%);letter-spacing:0.1px;">0.48%</div>
<svg style="left:741px;top:716.9px" width="8" height="9" viewBox="0 0 8 9"><path d="M1.5 2.4 L5.7 6.6 M2.5 6.6 L5.7 6.6 L5.7 3.4" fill="none" stroke="#c70a24" stroke-width="1.7" stroke-linecap="butt" stroke-linejoin="miter"/></svg>
<div class="t" style="left:772.00px;top:716.09px;font-size:11px;line-height:11px;color:#c70a24;font-weight:400;transform:translateX(-100%);letter-spacing:-0.3px;">20%</div>
<div class="r" style="left:265px;top:752px;width:525.33px;height:1px;background:#e3e3e3"></div>
<div class="t" style="left:280.50px;top:768.90px;font-size:13px;line-height:13px;color:#616161;font-weight:400;letter-spacing:0.34px;">Sessions converted</div>
<div class="t" style="left:280.50px;top:788.90px;font-size:13px;line-height:13px;color:#616161;font-weight:400;letter-spacing:0.0px;">1,951 sessions</div>
<div class="t" style="left:666.00px;top:779.40px;font-size:13px;line-height:13px;color:#616161;font-weight:400;transform:translateX(-100%);letter-spacing:0.1px;">0.19%</div>
<svg style="left:741px;top:781.9px" width="8" height="9" viewBox="0 0 8 9"><path d="M1.5 2.4 L5.7 6.6 M2.5 6.6 L5.7 6.6 L5.7 3.4" fill="none" stroke="#c70a24" stroke-width="1.7" stroke-linecap="butt" stroke-linejoin="miter"/></svg>
<div class="t" style="left:772.00px;top:781.09px;font-size:11px;line-height:11px;color:#c70a24;font-weight:400;transform:translateX(-100%);letter-spacing:-0.3px;">25%</div>
<div class="card" style="left:807.33px;top:547px;width:527.33px;height:354px"></div>
<svg style="left:823.33px;top:563px" width="78.5" height="20"><text x="0" y="15.3" font-family="Liberation Sans" font-size="13" fill="#616161" textLength="68.5" lengthAdjust="spacing">Total orders</text></svg>
<div class="r" style="left:823.33px;top:582px;width:68.5px;height:2px;background-image:linear-gradient(90deg,#c4c4c4 50%,transparent 50%);background-size:4px 2px"></div>
<svg style="left:1298.33px;top:565px" width="14" height="16" viewBox="0 0 14 16">
<path d="M2.2 1 L7.6 1 L12 5.4 L12 12.8 C12 13.8 11.3 14.4 10.4 14.4 L2.6 14.4 C1.7 14.4 1 13.8 1 12.8 L1 2.4 C1 1.6 1.5 1 2.2 1 Z" fill="none" stroke="#8a8a8a" stroke-width="1.3" stroke-linejoin="round"/>
<path d="M7.4 1.3 L7.4 5.6 L11.7 5.6" fill="none" stroke="#8a8a8a" stroke-width="1.3"/>
<path d="M4 12.2 L4 10 M6.2 12.2 L6.2 8.6 M8.4 12.2 L8.4 9.6" stroke="#8a8a8a" stroke-width="1.2" stroke-linecap="round"/></svg>
<svg style="left:823.83px;top:585px" width="60.5" height="24"><text x="0" y="18.2" font-family="Liberation Sans" font-weight="400" font-size="20" fill="#303030" stroke="#303030" stroke-width="0.6" textLength="50.5" lengthAdjust="spacing">2,174</text></svg>
<svg style="left:883.33px;top:592.5px" width="8" height="9" viewBox="0 0 8 9"><path d="M1.5 6.6 L5.7 2.4 M2.5 2.4 L5.7 2.4 L5.7 5.6" fill="none" stroke="#0c7d5b" stroke-width="1.7" stroke-linecap="butt" stroke-linejoin="miter"/></svg>
<div class="t" style="left:893.33px;top:591.19px;font-size:11px;line-height:11px;color:#0c7d5b;font-weight:400;letter-spacing:-0.35px;">9.4K%</div>
<div class="r" style="left:868.3px;top:627px;width:447.60000000000014px;height:1px;background:#ebebeb"></div>
<div class="t" style="left:847.50px;top:621.97px;font-size:11.5px;line-height:11.5px;color:#6b6b6b;font-weight:400;transform:translateX(-100%);letter-spacing:-0.3px;">100</div>
<div class="r" style="left:868.3px;top:721px;width:447.60000000000014px;height:1px;background:#ebebeb"></div>
<div class="t" style="left:847.50px;top:715.57px;font-size:11.5px;line-height:11.5px;color:#6b6b6b;font-weight:400;transform:translateX(-100%);letter-spacing:-0.3px;">50</div>
<div class="r" style="left:868.3px;top:814px;width:447.60000000000014px;height:1px;background:#ebebeb"></div>
<div class="t" style="left:847.50px;top:809.17px;font-size:11.5px;line-height:11.5px;color:#6b6b6b;font-weight:400;transform:translateX(-100%);letter-spacing:-0.3px;">0</div>
<div class="t" style="left:868.30px;top:830.57px;font-size:11.5px;line-height:11.5px;color:#6b6b6b;font-weight:400;transform:translateX(-50%);letter-spacing:-0.25px;">Jan 2016</div>
<div class="t" style="left:944.49px;top:830.57px;font-size:11.5px;line-height:11.5px;color:#6b6b6b;font-weight:400;transform:translateX(-50%);letter-spacing:-0.25px;">Sep 2016</div>
<div class="t" style="left:1020.67px;top:830.57px;font-size:11.5px;line-height:11.5px;color:#6b6b6b;font-weight:400;transform:translateX(-50%);letter-spacing:-0.25px;">May 2017</div>
<div class="t" style="left:1096.86px;top:830.57px;font-size:11.5px;line-height:11.5px;color:#6b6b6b;font-weight:400;transform:translateX(-50%);letter-spacing:-0.25px;">Jan 2018</div>
<div class="t" style="left:1173.05px;top:830.57px;font-size:11.5px;line-height:11.5px;color:#6b6b6b;font-weight:400;transform:translateX(-50%);letter-spacing:-0.25px;">Sep 2018</div>
<div class="t" style="left:1249.24px;top:830.57px;font-size:11.5px;line-height:11.5px;color:#6b6b6b;font-weight:400;transform:translateX(-50%);letter-spacing:-0.25px;">May 2019</div>
<svg style="left:0;top:0" width="1903" height="923" viewBox="0 0 1903 923">
<defs><linearGradient id="g3" x1="0" y1="627.7" x2="0" y2="814.9" gradientUnits="userSpaceOnUse"><stop offset="0" stop-color="#419bd2" stop-opacity="0.09"/><stop offset="1" stop-color="#419bd2" stop-opacity="0"/></linearGradient></defs>
<path d="M868.5 814.81 L869.5 814.38 L870.5 813.82 L871.5 813.25 L872.5 812.71 L873.5 812.22 L874.5 811.76 L875.5 811.36 L876.5 811.04 L877.5 810.82 L878.5 810.71 L879.5 810.68 L880.5 810.70 L881.5 810.74 L882.5 810.78 L883.5 810.81 L884.5 810.80 L885.5 810.77 L886.5 810.73 L887.5 810.66 L888.5 810.51 L889.5 810.20 L890.5 809.65 L891.5 808.85 L892.5 807.92 L893.5 807.07 L894.5 806.45 L895.5 806.01 L896.5 805.60 L897.5 804.97 L898.5 803.80 L899.5 801.79 L900.5 798.62 L901.5 793.60 L902.5 786.95 L903.5 781.53 L904.5 778.10 L905.5 775.71 L906.5 774.01 L907.5 772.80 L908.5 771.23 L909.5 767.11 L910.5 757.66 L911.5 744.78 L912.5 733.10 L913.5 725.13 L914.5 721.19 L915.5 719.52 L916.5 718.94 L917.5 719.65 L918.5 722.54 L919.5 728.20 L920.5 737.51 L921.5 750.71 L922.5 762.80 L923.5 770.66 L924.5 775.38 L925.5 777.62 L926.5 778.24 L927.5 778.10 L928.5 777.62 L929.5 776.93 L930.5 775.99 L931.5 774.68 L932.5 773.15 L933.5 771.71 L934.5 770.65 L935.5 770.08 L936.5 769.89 L937.5 769.95 L938.5 770.12 L939.5 770.35 L940.5 770.61 L941.5 770.96 L942.5 771.39 L943.5 771.79 L944.5 772.02 L945.5 771.69 L946.5 770.17 L947.5 766.53 L948.5 760.08 L949.5 752.89 L950.5 748.14 L951.5 745.72 L952.5 744.26 L953.5 742.90 L954.5 741.11 L955.5 738.46 L956.5 734.64 L957.5 728.91 L958.5 719.72 L959.5 709.06 L960.5 702.08 L961.5 698.88 L962.5 697.24 L963.5 695.95 L964.5 694.39 L965.5 692.02 L966.5 688.52 L967.5 683.75 L968.5 677.31 L969.5 669.32 L970.5 662.37 L971.5 658.33 L972.5 656.55 L973.5 656.62 L974.5 658.57 L975.5 662.30 L976.5 669.20 L977.5 682.53 L978.5 700.18 L979.5 715.29 L980.5 724.52 L981.5 729.26 L982.5 731.86 L983.5 733.46 L984.5 734.84 L985.5 737.05 L986.5 741.13 L987.5 746.50 L988.5 751.02 L989.5 754.15 L990.5 756.45 L991.5 757.91 L992.5 758.25 L993.5 757.47 L994.5 755.91 L995.5 753.82 L996.5 751.03 L997.5 747.78 L998.5 745.20 L999.5 743.77 L1000.5 743.01 L1001.5 742.40 L1002.5 741.52 L1003.5 739.79 L1004.5 736.70 L1005.5 732.90 L1006.5 729.51 L1007.5 726.60 L1008.5 724.20 L1009.5 722.57 L1010.5 721.77 L1011.5 721.58 L1012.5 721.73 L1013.5 722.03 L1014.5 722.38 L1015.5 722.76 L1016.5 723.21 L1017.5 723.71 L1018.5 724.22 L1019.5 724.72 L1020.5 725.16 L1021.5 725.62 L1022.5 726.39 L1023.5 728.07 L1024.5 731.60 L1025.5 737.00 L1026.5 742.37 L1027.5 746.58 L1028.5 749.92 L1029.5 752.05 L1030.5 752.24 L1031.5 750.34 L1032.5 746.96 L1033.5 742.59 L1034.5 736.80 L1035.5 730.09 L1036.5 725.36 L1037.5 723.17 L1038.5 722.21 L1039.5 721.93 L1040.5 722.76 L1041.5 725.45 L1042.5 730.09 L1043.5 736.57 L1044.5 744.93 L1045.5 752.44 L1046.5 756.78 L1047.5 758.74 L1048.5 759.58 L1049.5 759.96 L1050.5 760.12 L1051.5 760.17 L1052.5 760.11 L1053.5 759.94 L1054.5 759.69 L1055.5 759.41 L1056.5 759.13 L1057.5 758.90 L1058.5 758.74 L1059.5 758.68 L1060.5 758.70 L1061.5 758.77 L1062.5 758.86 L1063.5 758.94 L1064.5 758.98 L1065.5 758.93 L1066.5 758.73 L1067.5 758.28 L1068.5 757.47 L1069.5 755.83 L1070.5 751.47 L1071.5 741.93 L1072.5 731.57 L1073.5 726.08 L1074.5 723.72 L1075.5 722.39 L1076.5 721.64 L1077.5 721.31 L1078.5 721.08 L1079.5 720.39 L1080.5 718.38 L1081.5 714.35 L1082.5 709.49 L1083.5 705.90 L1084.5 703.69 L1085.5 702.16 L1086.5 701.07 L1087.5 700.35 L1088.5 699.66 L1089.5 698.23 L1090.5 695.03 L1091.5 690.29 L1092.5 686.20 L1093.5 683.65 L1094.5 681.97 L1095.5 680.75 L1096.5 679.95 L1097.5 679.31 L1098.5 678.19 L1099.5 675.41 L1100.5 670.28 L1101.5 664.62 L1102.5 660.40 L1103.5 657.42 L1104.5 655.38 L1105.5 654.14 L1106.5 653.38 L1107.5 652.76 L1108.5 651.93 L1109.5 650.47 L1110.5 648.17 L1111.5 645.67 L1112.5 643.64 L1113.5 642.00 L1114.5 640.66 L1115.5 639.79 L1116.5 639.73 L1117.5 640.68 L1118.5 642.62 L1119.5 645.89 L1120.5 651.42 L1121.5 658.09 L1122.5 662.92 L1123.5 665.64 L1124.5 667.54 L1125.5 669.23 L1126.5 670.82 L1127.5 672.49 L1128.5 674.97 L1129.5 679.16 L1130.5 684.22 L1131.5 687.96 L1132.5 690.11 L1133.5 691.50 L1134.5 692.50 L1135.5 693.20 L1136.5 693.64 L1137.5 693.85 L1138.5 693.93 L1139.5 693.98 L1140.5 694.05 L1141.5 694.23 L1142.5 694.53 L1143.5 694.94 L1144.5 695.51 L1145.5 696.53 L1146.5 699.01 L1147.5 705.32 L1148.5 715.79 L1149.5 726.78 L1150.5 735.88 L1151.5 742.08 L1152.5 746.05 L1153.5 748.13 L1154.5 748.41 L1155.5 747.46 L1156.5 745.87 L1157.5 743.82 L1158.5 741.11 L1159.5 738.27 L1160.5 736.29 L1161.5 735.23 L1162.5 734.58 L1163.5 733.92 L1164.5 732.80 L1165.5 730.65 L1166.5 727.28 L1167.5 723.54 L1168.5 720.12 L1169.5 717.04 L1170.5 714.67 L1171.5 713.28 L1172.5 712.71 L1173.5 712.66 L1174.5 712.85 L1175.5 713.11 L1176.5 713.30 L1177.5 713.36 L1178.5 713.29 L1179.5 713.18 L1180.5 713.15 L1181.5 713.34 L1182.5 713.97 L1183.5 715.27 L1184.5 717.30 L1185.5 720.12 L1186.5 723.90 L1187.5 728.06 L1188.5 731.70 L1189.5 734.77 L1190.5 737.31 L1191.5 738.74 L1192.5 738.16 L1193.5 735.16 L1194.5 729.76 L1195.5 721.12 L1196.5 710.46 L1197.5 702.74 L1198.5 698.59 L1199.5 696.10 L1200.5 694.51 L1201.5 693.55 L1202.5 692.91 L1203.5 692.25 L1204.5 691.20 L1205.5 689.59 L1206.5 687.78 L1207.5 686.38 L1208.5 685.53 L1209.5 685.01 L1210.5 684.72 L1211.5 684.66 L1212.5 684.92 L1213.5 685.55 L1214.5 686.40 L1215.5 687.26 L1216.5 687.95 L1217.5 688.50 L1218.5 688.99 L1219.5 689.54 L1220.5 690.33 L1221.5 691.67 L1222.5 693.96 L1223.5 697.37 L1224.5 701.74 L1225.5 706.90 L1226.5 711.51 L1227.5 714.43 L1228.5 716.08 L1229.5 716.99 L1230.5 716.96 L1231.5 715.45 L1232.5 712.34 L1233.5 708.31 L1234.5 704.18 L1235.5 699.96 L1236.5 695.46 L1237.5 691.27 L1238.5 688.15 L1239.5 686.62 L1240.5 686.66 L1241.5 687.82 L1242.5 689.71 L1243.5 692.40 L1244.5 697.03 L1245.5 704.79 L1246.5 712.96 L1247.5 718.23 L1248.5 721.18 L1249.5 722.31 L1250.5 721.26 L1251.5 718.37 L1252.5 714.65 L1253.5 710.62 L1254.5 706.10 L1255.5 701.36 L1256.5 697.29 L1257.5 694.70 L1258.5 693.96 L1259.5 694.81 L1260.5 696.64 L1261.5 699.07 L1262.5 702.12 L1263.5 706.30 L1264.5 711.41 L1265.5 715.92 L1266.5 718.72 L1267.5 720.01 L1268.5 720.12 L1269.5 718.82 L1270.5 716.11 L1271.5 712.50 L1272.5 708.50 L1273.5 703.94 L1274.5 698.89 L1275.5 694.71 L1276.5 692.59 L1277.5 692.51 L1278.5 693.70 L1279.5 695.67 L1280.5 698.90 L1281.5 705.50 L1282.5 716.23 L1283.5 726.69 L1284.5 733.27 L1285.5 736.21 L1286.5 737.45 L1287.5 738.09 L1288.5 738.67 L1289.5 739.99 L1290.5 742.78 L1291.5 746.87 L1292.5 751.41 L1293.5 755.30 L1294.5 757.55 L1295.5 758.54 L1296.5 758.95 L1297.5 758.99 L1298.5 758.60 L1299.5 757.82 L1300.5 756.84 L1301.5 755.95 L1302.5 755.21 L1303.5 754.56 L1304.5 753.95 L1305.5 753.42 L1306.1 753.00 L1306.1 814.9 L868.5 814.9 Z" fill="url(#g3)"/>
<path d="M868.3 815.00 L869.3 815.00 L870.3 815.00 L871.3 815.00 L872.3 815.00 L873.3 815.00 L874.3 815.00 L875.3 815.00 L876.3 815.00 L877.3 815.00 L878.3 815.00 L879.3 815.00 L880.3 815.00 L881.3 815.00 L882.3 815.00 L883.3 815.00 L884.3 815.00 L885.3 815.00 L886.3 815.00 L887.3 815.00 L888.3 815.00 L889.3 815.00 L890.3 815.00 L891.3 815.00 L892.3 815.00 L893.3 815.00 L894.3 815.00 L895.3 815.00 L896.3 815.00 L897.3 815.00 L898.3 815.00 L899.3 815.00 L900.3 815.00 L901.3 815.00 L902.3 815.00 L903.3 815.00 L904.3 815.00 L905.3 815.00 L906.3 815.00 L907.3 815.00 L908.3 815.00 L909.3 815.00 L910.3 815.00 L911.3 815.00 L912.3 815.00 L913.3 815.00 L914.3 815.00 L915.3 815.00 L916.3 815.00 L917.3 815.00 L918.3 815.00 L919.3 815.00 L920.3 815.00 L921.3 815.00 L922.3 815.00 L923.3 815.00 L924.3 815.00 L925.3 815.00 L926.3 815.00 L927.3 815.00 L928.3 815.00 L929.3 815.00 L930.3 815.00 L931.3 815.00 L932.3 815.00 L933.3 815.00 L934.3 815.00 L935.3 815.00 L936.3 815.00 L937.3 815.00 L938.3 815.00 L939.3 815.00 L940.3 815.00 L941.3 815.00 L942.3 815.00 L943.3 815.00 L944.3 815.00 L945.3 815.00 L946.3 815.00 L947.3 815.00 L948.3 815.00 L949.3 815.00 L950.3 815.00 L951.3 815.00 L952.3 815.00 L953.3 815.00 L954.3 815.00 L955.3 815.00 L956.3 815.00 L957.3 815.00 L958.3 815.00 L959.3 815.00 L960.3 815.00 L961.3 815.00 L962.3 815.00 L963.3 815.00 L964.3 815.00 L965.3 815.00 L966.3 815.00 L967.3 815.00 L968.3 815.00 L969.3 815.00 L970.3 815.00 L971.3 815.00 L972.3 815.00 L973.3 815.00 L974.3 815.00 L975.3 815.00 L976.3 815.00 L977.3 815.00 L978.3 815.00 L979.3 815.00 L980.3 815.00 L981.3 815.00 L982.3 815.00 L983.3 815.00 L984.3 815.00 L985.3 815.00 L986.3 815.00 L987.3 815.00 L988.3 815.00 L989.3 815.00 L990.3 815.00 L991.3 815.00 L992.3 815.00 L993.3 815.00 L994.3 815.00 L995.3 815.00 L996.3 815.00 L997.3 815.00 L998.3 815.00 L999.3 815.00 L1000.3 815.00 L1001.3 815.00 L1002.3 815.00 L1003.3 815.00 L1004.3 815.00 L1005.3 815.00 L1006.3 815.00 L1007.3 815.00 L1008.3 815.00 L1009.3 815.00 L1010.3 815.00 L1011.3 815.00 L1012.3 815.00 L1013.3 815.00 L1014.3 815.00 L1015.3 815.00 L1016.3 815.00 L1017.3 815.00 L1018.3 815.00 L1019.3 815.00 L1020.3 815.00 L1021.3 815.00 L1022.3 815.00 L1023.3 815.00 L1024.3 815.00 L1025.3 815.00 L1026.3 815.00 L1027.3 815.00 L1028.3 815.00 L1029.3 815.00 L1030.3 815.00 L1031.3 815.00 L1032.3 815.00 L1033.3 815.00 L1034.3 815.00 L1035.3 815.00 L1036.3 815.00 L1037.3 815.00 L1038.3 815.00 L1039.3 815.00 L1040.3 815.00 L1041.3 815.00 L1042.3 815.00 L1043.3 815.00 L1044.3 815.00 L1045.3 815.00 L1046.3 815.00 L1047.3 815.00 L1048.3 815.00 L1049.3 815.00 L1050.3 815.00 L1051.3 815.00 L1052.3 815.00 L1053.3 815.00 L1054.3 815.00 L1055.3 815.00 L1056.3 815.00 L1057.3 815.00 L1058.3 815.00 L1059.3 815.00 L1060.3 815.00 L1061.3 815.00 L1062.3 815.00 L1063.3 815.00 L1064.3 815.00 L1065.3 815.00 L1066.3 815.00 L1067.3 815.00 L1068.3 815.00 L1069.3 815.00 L1070.3 815.00 L1071.3 815.00 L1072.3 815.00 L1073.3 815.00 L1074.3 815.00 L1075.3 815.00 L1076.3 815.00 L1077.3 815.00 L1078.3 815.00 L1079.3 815.00 L1080.3 815.00 L1081.3 815.00 L1082.3 815.00 L1083.3 815.00 L1084.3 815.00 L1085.3 815.00 L1086.3 815.00 L1087.3 815.00 L1088.3 815.00 L1089.3 815.00 L1090.3 815.00 L1091.3 815.00 L1092.3 815.00 L1093.3 815.00 L1094.3 815.00 L1095.3 815.00 L1096.3 815.00 L1097.3 815.00 L1098.3 815.00 L1099.3 815.00 L1100.3 815.00 L1101.3 815.00 L1102.3 815.00 L1103.3 815.00 L1104.3 815.00 L1105.3 815.00 L1106.3 815.00 L1107.3 815.00 L1108.3 815.00 L1109.3 815.00 L1110.3 815.00 L1111.3 815.00 L1112.3 815.00 L1113.3 815.00 L1114.3 815.00 L1115.3 815.00 L1116.3 815.00 L1117.3 815.00 L1118.3 815.00 L1119.3 815.00 L1120.3 815.00 L1121.3 815.00 L1122.3 815.00 L1123.3 815.00 L1124.3 815.00 L1125.3 815.00 L1126.3 815.00 L1127.3 815.00 L1128.3 815.00 L1129.3 815.00 L1130.3 815.00 L1131.3 815.00 L1132.3 815.00 L1133.3 815.00 L1134.3 815.00 L1135.3 815.00 L1136.3 815.00 L1137.3 815.00 L1138.3 815.00 L1139.3 815.00 L1140.3 815.00 L1141.3 815.00 L1142.3 815.00 L1143.3 815.00 L1144.3 815.00 L1145.3 815.00 L1146.3 815.00 L1147.3 815.00 L1148.3 815.00 L1149.3 815.00 L1150.3 815.00 L1151.3 815.00 L1152.3 815.00 L1153.3 815.00 L1154.3 815.00 L1155.3 815.00 L1156.3 815.00 L1157.3 815.00 L1158.3 815.00 L1159.3 815.00 L1160.3 815.00 L1161.3 815.00 L1162.3 815.00 L1163.3 815.00 L1164.3 815.00 L1165.3 815.00 L1166.3 815.00 L1167.3 815.00 L1168.3 815.00 L1169.3 815.00 L1170.3 815.00 L1171.3 815.00 L1172.3 815.00 L1173.3 815.00 L1174.3 815.00 L1175.3 815.00 L1176.3 815.00 L1177.3 815.00 L1178.3 815.00 L1179.3 815.00 L1180.3 815.00 L1181.3 815.00 L1182.3 815.00 L1183.3 815.00 L1184.3 815.00 L1185.3 815.02 L1186.3 815.04 L1187.3 815.07 L1188.3 815.10 L1189.3 815.12 L1190.3 815.11 L1191.3 815.07 L1192.3 815.00 L1193.3 814.87 L1194.3 814.71 L1195.3 814.51 L1196.3 814.28 L1197.3 814.04 L1198.3 813.79 L1199.3 813.55 L1200.3 813.31 L1201.3 813.09 L1202.3 812.87 L1203.3 812.65 L1204.3 812.44 L1205.3 812.22 L1206.3 812.01 L1207.3 811.79 L1208.3 811.58 L1209.3 811.36 L1210.3 811.13 L1211.3 810.90 L1212.3 810.65 L1213.3 810.40 L1214.3 810.15 L1215.3 809.92 L1216.3 809.72 L1217.3 809.55 L1218.3 809.42 L1219.3 809.33 L1220.3 809.27 L1221.3 809.24 L1222.3 809.24 L1223.3 809.24 L1224.3 809.26 L1225.3 809.29 L1226.3 809.32 L1227.3 809.35 L1228.3 809.37 L1229.3 809.39 L1230.3 809.39 L1231.3 809.38 L1232.3 809.35 L1233.3 809.30 L1234.3 809.25 L1235.3 809.21 L1236.3 809.17 L1237.3 809.15 L1238.3 809.15 L1239.3 809.17 L1240.3 809.24 L1241.3 809.35 L1242.3 809.51 L1243.3 809.75 L1244.3 810.05 L1245.3 810.39 L1246.3 810.77 L1247.3 811.17 L1248.3 811.57 L1249.3 811.95 L1250.3 812.30 L1251.3 812.58 L1252.3 812.79 L1253.3 812.93 L1254.3 812.99 L1255.3 813.01 L1256.3 813.00 L1257.3 812.98 L1258.3 812.96 L1259.3 812.98 L1260.3 813.03 L1261.3 813.10 L1262.3 813.20 L1263.3 813.30 L1264.3 813.41 L1265.3 813.53 L1266.3 813.64 L1267.3 813.76 L1268.3 813.88 L1269.3 813.99 L1270.3 814.09 L1271.3 814.18 L1272.3 814.25 L1273.3 814.32 L1274.3 814.38 L1275.3 814.45 L1276.3 814.51 L1277.3 814.54 L1278.3 814.54 L1279.3 814.49 L1280.3 814.36 L1281.3 814.13 L1282.3 813.78 L1283.3 813.31 L1284.3 812.78 L1285.3 812.24 L1286.3 811.75 L1287.3 811.36 L1288.3 811.10 L1289.3 810.98 L1290.3 810.99 L1291.3 811.09 L1292.3 811.26 L1293.3 811.47 L1294.3 811.69 L1295.3 811.90 L1296.3 812.08 L1297.3 812.21 L1298.3 812.28 L1299.3 812.26 L1300.3 812.18 L1301.3 812.05 L1302.3 811.89 L1303.3 811.69 L1304.3 811.48 L1305.3 811.25 L1306.3 811.00 L1307.3 810.76 L1308.3 810.51 L1309.3 810.26 L1310.3 810.03 L1311.3 809.83 L1312.3 809.68 L1313.3 809.59 L1314.3 809.53 L1315.0 809.50" fill="none" stroke="#9fcde9" stroke-width="2" stroke-dasharray="0.1 4" stroke-linecap="round"/>
<path d="M868.5 814.81 L869.5 814.38 L870.5 813.82 L871.5 813.25 L872.5 812.71 L873.5 812.22 L874.5 811.76 L875.5 811.36 L876.5 811.04 L877.5 810.82 L878.5 810.71 L879.5 810.68 L880.5 810.70 L881.5 810.74 L882.5 810.78 L883.5 810.81 L884.5 810.80 L885.5 810.77 L886.5 810.73 L887.5 810.66 L888.5 810.51 L889.5 810.20 L890.5 809.65 L891.5 808.85 L892.5 807.92 L893.5 807.07 L894.5 806.45 L895.5 806.01 L896.5 805.60 L897.5 804.97 L898.5 803.80 L899.5 801.79 L900.5 798.62 L901.5 793.60 L902.5 786.95 L903.5 781.53 L904.5 778.10 L905.5 775.71 L906.5 774.01 L907.5 772.80 L908.5 771.23 L909.5 767.11 L910.5 757.66 L911.5 744.78 L912.5 733.10 L913.5 725.13 L914.5 721.19 L915.5 719.52 L916.5 718.94 L917.5 719.65 L918.5 722.54 L919.5 728.20 L920.5 737.51 L921.5 750.71 L922.5 762.80 L923.5 770.66 L924.5 775.38 L925.5 777.62 L926.5 778.24 L927.5 778.10 L928.5 777.62 L929.5 776.93 L930.5 775.99 L931.5 774.68 L932.5 773.15 L933.5 771.71 L934.5 770.65 L935.5 770.08 L936.5 769.89 L937.5 769.95 L938.5 770.12 L939.5 770.35 L940.5 770.61 L941.5 770.96 L942.5 771.39 L943.5 771.79 L944.5 772.02 L945.5 771.69 L946.5 770.17 L947.5 766.53 L948.5 760.08 L949.5 752.89 L950.5 748.14 L951.5 745.72 L952.5 744.26 L953.5 742.90 L954.5 741.11 L955.5 738.46 L956.5 734.64 L957.5 728.91 L958.5 719.72 L959.5 709.06 L960.5 702.08 L961.5 698.88 L962.5 697.24 L963.5 695.95 L964.5 694.39 L965.5 692.02 L966.5 688.52 L967.5 683.75 L968.5 677.31 L969.5 669.32 L970.5 662.37 L971.5 658.33 L972.5 656.55 L973.5 656.62 L974.5 658.57 L975.5 662.30 L976.5 669.20 L977.5 682.53 L978.5 700.18 L979.5 715.29 L980.5 724.52 L981.5 729.26 L982.5 731.86 L983.5 733.46 L984.5 734.84 L985.5 737.05 L986.5 741.13 L987.5 746.50 L988.5 751.02 L989.5 754.15 L990.5 756.45 L991.5 757.91 L992.5 758.25 L993.5 757.47 L994.5 755.91 L995.5 753.82 L996.5 751.03 L997.5 747.78 L998.5 745.20 L999.5 743.77 L1000.5 743.01 L1001.5 742.40 L1002.5 741.52 L1003.5 739.79 L1004.5 736.70 L1005.5 732.90 L1006.5 729.51 L1007.5 726.60 L1008.5 724.20 L1009.5 722.57 L1010.5 721.77 L1011.5 721.58 L1012.5 721.73 L1013.5 722.03 L1014.5 722.38 L1015.5 722.76 L1016.5 723.21 L1017.5 723.71 L1018.5 724.22 L1019.5 724.72 L1020.5 725.16 L1021.5 725.62 L1022.5 726.39 L1023.5 728.07 L1024.5 731.60 L1025.5 737.00 L1026.5 742.37 L1027.5 746.58 L1028.5 749.92 L1029.5 752.05 L1030.5 752.24 L1031.5 750.34 L1032.5 746.96 L1033.5 742.59 L1034.5 736.80 L1035.5 730.09 L1036.5 725.36 L1037.5 723.17 L1038.5 722.21 L1039.5 721.93 L1040.5 722.76 L1041.5 725.45 L1042.5 730.09 L1043.5 736.57 L1044.5 744.93 L1045.5 752.44 L1046.5 756.78 L1047.5 758.74 L1048.5 759.58 L1049.5 759.96 L1050.5 760.12 L1051.5 760.17 L1052.5 760.11 L1053.5 759.94 L1054.5 759.69 L1055.5 759.41 L1056.5 759.13 L1057.5 758.90 L1058.5 758.74 L1059.5 758.68 L1060.5 758.70 L1061.5 758.77 L1062.5 758.86 L1063.5 758.94 L1064.5 758.98 L1065.5 758.93 L1066.5 758.73 L1067.5 758.28 L1068.5 757.47 L1069.5 755.83 L1070.5 751.47 L1071.5 741.93 L1072.5 731.57 L1073.5 726.08 L1074.5 723.72 L1075.5 722.39 L1076.5 721.64 L1077.5 721.31 L1078.5 721.08 L1079.5 720.39 L1080.5 718.38 L1081.5 714.35 L1082.5 709.49 L1083.5 705.90 L1084.5 703.69 L1085.5 702.16 L1086.5 701.07 L1087.5 700.35 L1088.5 699.66 L1089.5 698.23 L1090.5 695.03 L1091.5 690.29 L1092.5 686.20 L1093.5 683.65 L1094.5 681.97 L1095.5 680.75 L1096.5 679.95 L1097.5 679.31 L1098.5 678.19 L1099.5 675.41 L1100.5 670.28 L1101.5 664.62 L1102.5 660.40 L1103.5 657.42 L1104.5 655.38 L1105.5 654.14 L1106.5 653.38 L1107.5 652.76 L1108.5 651.93 L1109.5 650.47 L1110.5 648.17 L1111.5 645.67 L1112.5 643.64 L1113.5 642.00 L1114.5 640.66 L1115.5 639.79 L1116.5 639.73 L1117.5 640.68 L1118.5 642.62 L1119.5 645.89 L1120.5 651.42 L1121.5 658.09 L1122.5 662.92 L1123.5 665.64 L1124.5 667.54 L1125.5 669.23 L1126.5 670.82 L1127.5 672.49 L1128.5 674.97 L1129.5 679.16 L1130.5 684.22 L1131.5 687.96 L1132.5 690.11 L1133.5 691.50 L1134.5 692.50 L1135.5 693.20 L1136.5 693.64 L1137.5 693.85 L1138.5 693.93 L1139.5 693.98 L1140.5 694.05 L1141.5 694.23 L1142.5 694.53 L1143.5 694.94 L1144.5 695.51 L1145.5 696.53 L1146.5 699.01 L1147.5 705.32 L1148.5 715.79 L1149.5 726.78 L1150.5 735.88 L1151.5 742.08 L1152.5 746.05 L1153.5 748.13 L1154.5 748.41 L1155.5 747.46 L1156.5 745.87 L1157.5 743.82 L1158.5 741.11 L1159.5 738.27 L1160.5 736.29 L1161.5 735.23 L1162.5 734.58 L1163.5 733.92 L1164.5 732.80 L1165.5 730.65 L1166.5 727.28 L1167.5 723.54 L1168.5 720.12 L1169.5 717.04 L1170.5 714.67 L1171.5 713.28 L1172.5 712.71 L1173.5 712.66 L1174.5 712.85 L1175.5 713.11 L1176.5 713.30 L1177.5 713.36 L1178.5 713.29 L1179.5 713.18 L1180.5 713.15 L1181.5 713.34 L1182.5 713.97 L1183.5 715.27 L1184.5 717.30 L1185.5 720.12 L1186.5 723.90 L1187.5 728.06 L1188.5 731.70 L1189.5 734.77 L1190.5 737.31 L1191.5 738.74 L1192.5 738.16 L1193.5 735.16 L1194.5 729.76 L1195.5 721.12 L1196.5 710.46 L1197.5 702.74 L1198.5 698.59 L1199.5 696.10 L1200.5 694.51 L1201.5 693.55 L1202.5 692.91 L1203.5 692.25 L1204.5 691.20 L1205.5 689.59 L1206.5 687.78 L1207.5 686.38 L1208.5 685.53 L1209.5 685.01 L1210.5 684.72 L1211.5 684.66 L1212.5 684.92 L1213.5 685.55 L1214.5 686.40 L1215.5 687.26 L1216.5 687.95 L1217.5 688.50 L1218.5 688.99 L1219.5 689.54 L1220.5 690.33 L1221.5 691.67 L1222.5 693.96 L1223.5 697.37 L1224.5 701.74 L1225.5 706.90 L1226.5 711.51 L1227.5 714.43 L1228.5 716.08 L1229.5 716.99 L1230.5 716.96 L1231.5 715.45 L1232.5 712.34 L1233.5 708.31 L1234.5 704.18 L1235.5 699.96 L1236.5 695.46 L1237.5 691.27 L1238.5 688.15 L1239.5 686.62 L1240.5 686.66 L1241.5 687.82 L1242.5 689.71 L1243.5 692.40 L1244.5 697.03 L1245.5 704.79 L1246.5 712.96 L1247.5 718.23 L1248.5 721.18 L1249.5 722.31 L1250.5 721.26 L1251.5 718.37 L1252.5 714.65 L1253.5 710.62 L1254.5 706.10 L1255.5 701.36 L1256.5 697.29 L1257.5 694.70 L1258.5 693.96 L1259.5 694.81 L1260.5 696.64 L1261.5 699.07 L1262.5 702.12 L1263.5 706.30 L1264.5 711.41 L1265.5 715.92 L1266.5 718.72 L1267.5 720.01 L1268.5 720.12 L1269.5 718.82 L1270.5 716.11 L1271.5 712.50 L1272.5 708.50 L1273.5 703.94 L1274.5 698.89 L1275.5 694.71 L1276.5 692.59 L1277.5 692.51 L1278.5 693.70 L1279.5 695.67 L1280.5 698.90 L1281.5 705.50 L1282.5 716.23 L1283.5 726.69 L1284.5 733.27 L1285.5 736.21 L1286.5 737.45 L1287.5 738.09 L1288.5 738.67 L1289.5 739.99 L1290.5 742.78 L1291.5 746.87 L1292.5 751.41 L1293.5 755.30 L1294.5 757.55 L1295.5 758.54 L1296.5 758.95 L1297.5 758.99 L1298.5 758.60 L1299.5 757.82 L1300.5 756.84 L1301.5 755.95 L1302.5 755.21 L1303.5 754.56 L1304.5 753.95 L1305.5 753.42 L1306.1 753.00" fill="none" stroke="#419bd2" stroke-width="2.05" stroke-linecap="round" stroke-linejoin="round"/>
</svg>
<div class="r" style="left:942.9000000000001px;top:860.9px;width:179.5px;height:24px;background:#f3f4f6;border-radius:2px"></div>
<div class="r" style="left:1132.9px;top:860.9px;width:183.5px;height:24px;background:#f3f4f6;border-radius:2px"></div>
<div class="r" style="left:950.9000000000001px;top:871.9px;width:13px;height:2px;background:#419bd2;border-radius:1px"></div>
<svg style="left:1140.9px;top:870.9px" width="16" height="4"><path d="M1 2 L14 2" stroke="#9fcde9" stroke-width="2" stroke-dasharray="0.1 4" stroke-linecap="round"/></svg>
<div class="t" style="left:970.90px;top:868.17px;font-size:11.5px;line-height:11.5px;color:#6b6b6b;font-weight:400;letter-spacing:-0.06px;">Dec 31, 2019–Dec 1, 2023</div>
<div class="t" style="left:1160.90px;top:868.17px;font-size:11.5px;line-height:11.5px;color:#6b6b6b;font-weight:400;letter-spacing:-0.06px;">Jan 29, 2016–Dec 30, 2019</div>
<div class="card" style="left:1350.67px;top:547px;width:527.33px;height:354px"></div>
<svg style="left:1366.67px;top:563px" width="123.7" height="20"><text x="0" y="15.3" font-family="Liberation Sans" font-size="13" fill="#616161" textLength="113.7" lengthAdjust="spacing">Average order value</text></svg>
<div class="r" style="left:1366.67px;top:582px;width:113.7px;height:2px;background-image:linear-gradient(90deg,#c4c4c4 50%,transparent 50%);background-size:4px 2px"></div>
<svg style="left:1841.67px;top:565px" width="14" height="16" viewBox="0 0 14 16">
<path d="M2.2 1 L7.6 1 L12 5.4 L12 12.8 C12 13.8 11.3 14.4 10.4 14.4 L2.6 14.4 C1.7 14.4 1 13.8 1 12.8 L1 2.4 C1 1.6 1.5 1 2.2 1 Z" fill="none" stroke="#8a8a8a" stroke-width="1.3" stroke-linejoin="round"/>
<path d="M7.4 1.3 L7.4 5.6 L11.7 5.6" fill="none" stroke="#8a8a8a" stroke-width="1.3"/>
<path d="M4 12.2 L4 10 M6.2 12.2 L6.2 8.6 M8.4 12.2 L8.4 9.6" stroke="#8a8a8a" stroke-width="1.2" stroke-linecap="round"/></svg>
<svg style="left:1367.17px;top:585px" width="107" height="24"><text x="0" y="18.2" font-family="Liberation Sans" font-weight="400" font-size="20" fill="#303030" stroke="#303030" stroke-width="0.6" textLength="97" lengthAdjust="spacing">$2,235.75</text></svg>
<svg style="left:1473.17px;top:592.5px" width="8" height="9" viewBox="0 0 8 9"><path d="M1.5 6.6 L5.7 2.4 M2.5 2.4 L5.7 2.4 L5.7 5.6" fill="none" stroke="#0c7d5b" stroke-width="1.7" stroke-linecap="butt" stroke-linejoin="miter"/></svg>
<div class="t" style="left:1483.17px;top:591.19px;font-size:11px;line-height:11px;color:#0c7d5b;font-weight:400;letter-spacing:-0.35px;">28%</div>
<div class="r" style="left:1412.2px;top:627px;width:446.0999999999999px;height:1px;background:#ebebeb"></div>
<div class="t" style="left:1389.50px;top:621.97px;font-size:11.5px;line-height:11.5px;color:#6b6b6b;font-weight:400;transform:translateX(-100%);letter-spacing:-0.3px;">$4…</div>
<div class="r" style="left:1412.2px;top:674px;width:446.0999999999999px;height:1px;background:#ebebeb"></div>
<div class="t" style="left:1389.50px;top:668.77px;font-size:11.5px;line-height:11.5px;color:#6b6b6b;font-weight:400;transform:translateX(-100%);letter-spacing:-0.3px;">$3K</div>
<div class="r" style="left:1412.2px;top:721px;width:446.0999999999999px;height:1px;background:#ebebeb"></div>
<div class="t" style="left:1389.50px;top:715.57px;font-size:11.5px;line-height:11.5px;color:#6b6b6b;font-weight:400;transform:translateX(-100%);letter-spacing:-0.3px;">$2K</div>
<div class="r" style="left:1412.2px;top:768px;width:446.0999999999999px;height:1px;background:#ebebeb"></div>
<div class="t" style="left:1389.50px;top:762.37px;font-size:11.5px;line-height:11.5px;color:#6b6b6b;font-weight:400;transform:translateX(-100%);letter-spacing:-0.3px;">$1K</div>
<div class="r" style="left:1412.2px;top:814px;width:446.0999999999999px;height:1px;background:#ebebeb"></div>
<div class="t" style="left:1389.50px;top:809.17px;font-size:11.5px;line-height:11.5px;color:#6b6b6b;font-weight:400;transform:translateX(-100%);letter-spacing:-0.3px;">$0</div>
<div class="t" style="left:1412.20px;top:830.57px;font-size:11.5px;line-height:11.5px;color:#6b6b6b;font-weight:400;transform:translateX(-50%);letter-spacing:-0.25px;">Jan 2016</div>
<div class="t" style="left:1488.13px;top:830.57px;font-size:11.5px;line-height:11.5px;color:#6b6b6b;font-weight:400;transform:translateX(-50%);letter-spacing:-0.25px;">Sep 2016</div>
<div class="t" style="left:1564.06px;top:830.57px;font-size:11.5px;line-height:11.5px;color:#6b6b6b;font-weight:400;transform:translateX(-50%);letter-spacing:-0.25px;">May 2017</div>
<div class="t" style="left:1640.00px;top:830.57px;font-size:11.5px;line-height:11.5px;color:#6b6b6b;font-weight:400;transform:translateX(-50%);letter-spacing:-0.25px;">Jan 2018</div>
<div class="t" style="left:1715.93px;top:830.57px;font-size:11.5px;line-height:11.5px;color:#6b6b6b;font-weight:400;transform:translateX(-50%);letter-spacing:-0.25px;">Sep 2018</div>
<div class="t" style="left:1791.86px;top:830.57px;font-size:11.5px;line-height:11.5px;color:#6b6b6b;font-weight:400;transform:translateX(-50%);letter-spacing:-0.25px;">May 2019</div>
<svg style="left:0;top:0" width="1903" height="923" viewBox="0 0 1903 923">
<defs><linearGradient id="g4" x1="0" y1="627.7" x2="0" y2="814.9" gradientUnits="userSpaceOnUse"><stop offset="0" stop-color="#419bd2" stop-opacity="0.09"/><stop offset="1" stop-color="#419bd2" stop-opacity="0"/></linearGradient></defs>
<path d="M1412.5 814.04 L1413.5 811.30 L1414.5 805.26 L1415.5 793.50 L1416.5 775.03 L1417.5 752.53 L1418.5 734.17 L1419.5 724.42 L1420.5 719.79 L1421.5 718.10 L1422.5 718.37 L1423.5 719.79 L1424.5 722.60 L1425.5 727.36 L1426.5 732.50 L1427.5 736.62 L1428.5 739.97 L1429.5 742.48 L1430.5 743.77 L1431.5 743.80 L1432.5 742.89 L1433.5 741.26 L1434.5 738.58 L1435.5 734.67 L1436.5 730.65 L1437.5 727.86 L1438.5 726.38 L1439.5 725.64 L1440.5 725.32 L1441.5 725.40 L1442.5 725.98 L1443.5 726.98 L1444.5 728.17 L1445.5 729.36 L1446.5 730.56 L1447.5 731.73 L1448.5 732.74 L1449.5 733.49 L1450.5 733.96 L1451.5 734.29 L1452.5 734.66 L1453.5 735.26 L1454.5 736.16 L1455.5 737.26 L1456.5 738.33 L1457.5 739.17 L1458.5 739.73 L1459.5 740.13 L1460.5 740.51 L1461.5 740.98 L1462.5 741.70 L1463.5 742.68 L1464.5 743.76 L1465.5 744.67 L1466.5 745.37 L1467.5 745.91 L1468.5 746.26 L1469.5 746.29 L1470.5 745.80 L1471.5 744.73 L1472.5 743.28 L1473.5 741.80 L1474.5 740.42 L1475.5 739.10 L1476.5 737.94 L1477.5 737.10 L1478.5 736.62 L1479.5 736.44 L1480.5 736.44 L1481.5 736.52 L1482.5 736.61 L1483.5 736.68 L1484.5 736.70 L1485.5 736.73 L1486.5 736.77 L1487.5 736.79 L1488.5 736.72 L1489.5 736.45 L1490.5 735.72 L1491.5 734.03 L1492.5 731.16 L1493.5 728.13 L1494.5 726.11 L1495.5 725.07 L1496.5 724.49 L1497.5 724.06 L1498.5 723.65 L1499.5 723.15 L1500.5 722.50 L1501.5 721.71 L1502.5 720.90 L1503.5 720.21 L1504.5 719.77 L1505.5 719.62 L1506.5 719.72 L1507.5 720.07 L1508.5 720.86 L1509.5 722.82 L1510.5 727.22 L1511.5 733.47 L1512.5 738.83 L1513.5 742.65 L1514.5 745.18 L1515.5 746.48 L1516.5 746.95 L1517.5 746.79 L1518.5 745.90 L1519.5 744.31 L1520.5 742.47 L1521.5 740.76 L1522.5 739.17 L1523.5 737.73 L1524.5 736.70 L1525.5 736.33 L1526.5 736.66 L1527.5 737.54 L1528.5 738.97 L1529.5 741.35 L1530.5 745.14 L1531.5 749.59 L1532.5 753.23 L1533.5 755.77 L1534.5 757.51 L1535.5 758.24 L1536.5 757.72 L1537.5 756.15 L1538.5 753.92 L1539.5 751.04 L1540.5 747.28 L1541.5 743.55 L1542.5 741.04 L1543.5 739.78 L1544.5 739.21 L1545.5 738.83 L1546.5 738.32 L1547.5 737.44 L1548.5 736.13 L1549.5 734.53 L1550.5 732.95 L1551.5 731.63 L1552.5 730.73 L1553.5 730.18 L1554.5 729.81 L1555.5 729.47 L1556.5 728.97 L1557.5 728.09 L1558.5 726.64 L1559.5 724.63 L1560.5 722.40 L1561.5 720.45 L1562.5 719.11 L1563.5 718.35 L1564.5 717.90 L1565.5 717.45 L1566.5 716.67 L1567.5 715.26 L1568.5 713.40 L1569.5 711.68 L1570.5 710.34 L1571.5 709.23 L1572.5 708.43 L1573.5 708.19 L1574.5 708.86 L1575.5 710.60 L1576.5 713.02 L1577.5 715.51 L1578.5 717.83 L1579.5 720.13 L1580.5 722.35 L1581.5 724.17 L1582.5 725.27 L1583.5 725.47 L1584.5 724.86 L1585.5 723.75 L1586.5 722.47 L1587.5 721.19 L1588.5 719.86 L1589.5 718.51 L1590.5 717.30 L1591.5 716.37 L1592.5 715.74 L1593.5 715.24 L1594.5 714.64 L1595.5 713.60 L1596.5 711.78 L1597.5 709.24 L1598.5 706.70 L1599.5 704.88 L1600.5 703.85 L1601.5 703.22 L1602.5 702.58 L1603.5 701.49 L1604.5 699.29 L1605.5 695.47 L1606.5 690.06 L1607.5 683.57 L1608.5 678.15 L1609.5 675.24 L1610.5 673.96 L1611.5 673.65 L1612.5 674.62 L1613.5 677.37 L1614.5 682.28 L1615.5 690.67 L1616.5 701.86 L1617.5 710.80 L1618.5 716.35 L1619.5 719.35 L1620.5 720.45 L1621.5 720.48 L1622.5 719.93 L1623.5 718.70 L1624.5 716.45 L1625.5 713.49 L1626.5 710.86 L1627.5 709.13 L1628.5 708.08 L1629.5 707.38 L1630.5 706.90 L1631.5 706.63 L1632.5 706.55 L1633.5 706.62 L1634.5 706.79 L1635.5 707.00 L1636.5 707.17 L1637.5 707.30 L1638.5 707.38 L1639.5 707.51 L1640.5 707.80 L1641.5 708.44 L1642.5 709.77 L1643.5 711.99 L1644.5 714.66 L1645.5 716.93 L1646.5 718.60 L1647.5 719.92 L1648.5 720.93 L1649.5 721.40 L1650.5 721.00 L1651.5 719.58 L1652.5 717.50 L1653.5 715.42 L1654.5 713.64 L1655.5 712.04 L1656.5 710.60 L1657.5 709.50 L1658.5 708.97 L1659.5 709.15 L1660.5 709.94 L1661.5 711.12 L1662.5 712.40 L1663.5 713.65 L1664.5 714.95 L1665.5 716.30 L1666.5 717.54 L1667.5 718.44 L1668.5 718.79 L1669.5 718.51 L1670.5 717.73 L1671.5 716.66 L1672.5 715.41 L1673.5 713.89 L1674.5 712.15 L1675.5 710.59 L1676.5 709.54 L1677.5 708.99 L1678.5 708.75 L1679.5 708.68 L1680.5 708.68 L1681.5 708.71 L1682.5 708.79 L1683.5 708.96 L1684.5 709.19 L1685.5 709.40 L1686.5 709.50 L1687.5 709.34 L1688.5 708.58 L1689.5 706.82 L1690.5 703.99 L1691.5 700.48 L1692.5 696.53 L1693.5 692.95 L1694.5 690.52 L1695.5 689.01 L1696.5 688.15 L1697.5 688.01 L1698.5 688.63 L1699.5 689.86 L1700.5 691.81 L1701.5 695.22 L1702.5 699.96 L1703.5 703.82 L1704.5 706.00 L1705.5 707.43 L1706.5 708.65 L1707.5 709.76 L1708.5 710.92 L1709.5 712.74 L1710.5 716.30 L1711.5 721.83 L1712.5 727.42 L1713.5 731.64 L1714.5 734.69 L1715.5 736.31 L1716.5 736.13 L1717.5 734.45 L1718.5 731.79 L1719.5 728.00 L1720.5 723.06 L1721.5 718.57 L1722.5 715.54 L1723.5 713.42 L1724.5 711.83 L1725.5 710.89 L1726.5 710.84 L1727.5 711.73 L1728.5 713.20 L1729.5 714.72 L1730.5 716.03 L1731.5 717.20 L1732.5 718.29 L1733.5 719.20 L1734.5 719.83 L1735.5 720.06 L1736.5 719.84 L1737.5 719.28 L1738.5 718.57 L1739.5 717.87 L1740.5 717.31 L1741.5 716.91 L1742.5 716.59 L1743.5 716.31 L1744.5 716.02 L1745.5 715.67 L1746.5 715.20 L1747.5 714.57 L1748.5 713.79 L1749.5 712.92 L1750.5 712.05 L1751.5 711.30 L1752.5 710.71 L1753.5 710.27 L1754.5 709.87 L1755.5 709.39 L1756.5 708.58 L1757.5 706.95 L1758.5 704.10 L1759.5 700.86 L1760.5 698.41 L1761.5 696.64 L1762.5 695.28 L1763.5 694.44 L1764.5 694.25 L1765.5 694.70 L1766.5 695.54 L1767.5 696.46 L1768.5 697.24 L1769.5 697.86 L1770.5 698.43 L1771.5 699.06 L1772.5 699.83 L1773.5 700.79 L1774.5 702.03 L1775.5 703.88 L1776.5 706.73 L1777.5 710.24 L1778.5 713.35 L1779.5 715.75 L1780.5 717.62 L1781.5 718.72 L1782.5 718.62 L1783.5 717.25 L1784.5 714.90 L1785.5 711.71 L1786.5 707.08 L1787.5 701.53 L1788.5 697.42 L1789.5 695.27 L1790.5 694.08 L1791.5 693.20 L1792.5 692.29 L1793.5 691.01 L1794.5 688.69 L1795.5 684.60 L1796.5 679.57 L1797.5 675.35 L1798.5 671.96 L1799.5 669.06 L1800.5 666.87 L1801.5 665.74 L1802.5 665.88 L1803.5 667.13 L1804.5 669.08 L1805.5 671.45 L1806.5 674.20 L1807.5 677.56 L1808.5 681.14 L1809.5 684.10 L1810.5 686.08 L1811.5 686.58 L1812.5 685.26 L1813.5 682.44 L1814.5 678.03 L1815.5 670.43 L1816.5 659.68 L1817.5 650.40 L1818.5 644.48 L1819.5 640.79 L1820.5 639.31 L1821.5 640.08 L1822.5 642.55 L1823.5 646.93 L1824.5 654.78 L1825.5 664.92 L1826.5 672.88 L1827.5 678.01 L1828.5 681.32 L1829.5 682.81 L1830.5 682.67 L1831.5 681.48 L1832.5 679.56 L1833.5 676.43 L1834.5 671.34 L1835.5 665.94 L1836.5 662.56 L1837.5 660.83 L1838.5 659.59 L1839.5 658.41 L1840.5 657.17 L1841.5 655.48 L1842.5 652.42 L1843.5 647.55 L1844.5 642.57 L1845.5 639.23 L1846.5 637.22 L1847.5 635.71 L1848.5 634.52 L1849.1 633.60 L1849.1 814.9 L1412.5 814.9 Z" fill="url(#g4)"/>
<path d="M1412.2 815.00 L1413.2 815.00 L1414.2 815.00 L1415.2 815.00 L1416.2 814.99 L1417.2 814.99 L1418.2 814.99 L1419.2 814.99 L1420.2 814.99 L1421.2 814.99 L1422.2 814.98 L1423.2 814.98 L1424.2 814.98 L1425.2 814.98 L1426.2 814.98 L1427.2 814.98 L1428.2 814.97 L1429.2 814.97 L1430.2 814.97 L1431.2 814.97 L1432.2 814.97 L1433.2 814.97 L1434.2 814.96 L1435.2 814.96 L1436.2 814.96 L1437.2 814.96 L1438.2 814.96 L1439.2 814.96 L1440.2 814.96 L1441.2 814.95 L1442.2 814.95 L1443.2 814.95 L1444.2 814.95 L1445.2 814.95 L1446.2 814.95 L1447.2 814.94 L1448.2 814.94 L1449.2 814.94 L1450.2 814.94 L1451.2 814.94 L1452.2 814.94 L1453.2 814.93 L1454.2 814.93 L1455.2 814.93 L1456.2 814.93 L1457.2 814.93 L1458.2 814.93 L1459.2 814.93 L1460.2 814.92 L1461.2 814.92 L1462.2 814.92 L1463.2 814.92 L1464.2 814.92 L1465.2 814.92 L1466.2 814.91 L1467.2 814.91 L1468.2 814.91 L1469.2 814.91 L1470.2 814.91 L1471.2 814.91 L1472.2 814.90 L1473.2 814.90 L1474.2 814.90 L1475.2 814.90 L1476.2 814.90 L1477.2 814.90 L1478.2 814.89 L1479.2 814.89 L1480.2 814.89 L1481.2 814.89 L1482.2 814.89 L1483.2 814.89 L1484.2 814.89 L1485.2 814.88 L1486.2 814.88 L1487.2 814.88 L1488.2 814.88 L1489.2 814.88 L1490.2 814.88 L1491.2 814.87 L1492.2 814.87 L1493.2 814.87 L1494.2 814.87 L1495.2 814.87 L1496.2 814.87 L1497.2 814.86 L1498.2 814.86 L1499.2 814.86 L1500.2 814.86 L1501.2 814.86 L1502.2 814.86 L1503.2 814.86 L1504.2 814.85 L1505.2 814.85 L1506.2 814.85 L1507.2 814.85 L1508.2 814.85 L1509.2 814.85 L1510.2 814.84 L1511.2 814.84 L1512.2 814.84 L1513.2 814.84 L1514.2 814.84 L1515.2 814.84 L1516.2 814.83 L1517.2 814.83 L1518.2 814.83 L1519.2 814.83 L1520.2 814.83 L1521.2 814.83 L1522.2 814.82 L1523.2 814.82 L1524.2 814.82 L1525.2 814.82 L1526.2 814.82 L1527.2 814.82 L1528.2 814.82 L1529.2 814.81 L1530.2 814.81 L1531.2 814.81 L1532.2 814.81 L1533.2 814.81 L1534.2 814.81 L1535.2 814.80 L1536.2 814.80 L1537.2 814.80 L1538.2 814.80 L1539.2 814.80 L1540.2 814.80 L1541.2 814.79 L1542.2 814.79 L1543.2 814.79 L1544.2 814.79 L1545.2 814.79 L1546.2 814.79 L1547.2 814.78 L1548.2 814.78 L1549.2 814.78 L1550.2 814.78 L1551.2 814.78 L1552.2 814.78 L1553.2 814.78 L1554.2 814.77 L1555.2 814.77 L1556.2 814.77 L1557.2 814.77 L1558.2 814.77 L1559.2 814.77 L1560.2 814.76 L1561.2 814.76 L1562.2 814.76 L1563.2 814.76 L1564.2 814.76 L1565.2 814.76 L1566.2 814.75 L1567.2 814.75 L1568.2 814.75 L1569.2 814.75 L1570.2 814.75 L1571.2 814.75 L1572.2 814.75 L1573.2 814.74 L1574.2 814.74 L1575.2 814.74 L1576.2 814.74 L1577.2 814.74 L1578.2 814.74 L1579.2 814.73 L1580.2 814.73 L1581.2 814.73 L1582.2 814.73 L1583.2 814.73 L1584.2 814.73 L1585.2 814.72 L1586.2 814.72 L1587.2 814.72 L1588.2 814.72 L1589.2 814.72 L1590.2 814.72 L1591.2 814.71 L1592.2 814.71 L1593.2 814.71 L1594.2 814.71 L1595.2 814.71 L1596.2 814.71 L1597.2 814.71 L1598.2 814.70 L1599.2 814.70 L1600.2 814.70 L1601.2 814.70 L1602.2 814.70 L1603.2 814.70 L1604.2 814.69 L1605.2 814.69 L1606.2 814.69 L1607.2 814.69 L1608.2 814.69 L1609.2 814.69 L1610.2 814.68 L1611.2 814.68 L1612.2 814.68 L1613.2 814.68 L1614.2 814.68 L1615.2 814.68 L1616.2 814.67 L1617.2 814.67 L1618.2 814.67 L1619.2 814.67 L1620.2 814.67 L1621.2 814.67 L1622.2 814.67 L1623.2 814.66 L1624.2 814.66 L1625.2 814.66 L1626.2 814.66 L1627.2 814.66 L1628.2 814.66 L1629.2 814.65 L1630.2 814.65 L1631.2 814.65 L1632.2 814.65 L1633.2 814.65 L1634.2 814.65 L1635.2 814.64 L1636.2 814.64 L1637.2 814.64 L1638.2 814.64 L1639.2 814.64 L1640.2 814.64 L1641.2 814.64 L1642.2 814.63 L1643.2 814.63 L1644.2 814.63 L1645.2 814.63 L1646.2 814.63 L1647.2 814.63 L1648.2 814.62 L1649.2 814.62 L1650.2 814.62 L1651.2 814.62 L1652.2 814.62 L1653.2 814.62 L1654.2 814.61 L1655.2 814.61 L1656.2 814.61 L1657.2 814.61 L1658.2 814.61 L1659.2 814.61 L1660.2 814.60 L1661.2 814.60 L1662.2 814.60 L1663.2 814.60 L1664.2 814.60 L1665.2 814.60 L1666.2 814.60 L1667.2 814.59 L1668.2 814.59 L1669.2 814.59 L1670.2 814.59 L1671.2 814.59 L1672.2 814.59 L1673.2 814.58 L1674.2 814.58 L1675.2 814.58 L1676.2 814.58 L1677.2 814.58 L1678.2 814.58 L1679.2 814.57 L1680.2 814.57 L1681.2 814.57 L1682.2 814.57 L1683.2 814.57 L1684.2 814.57 L1685.2 814.57 L1686.2 814.56 L1687.2 814.56 L1688.2 814.56 L1689.2 814.56 L1690.2 814.56 L1691.2 814.56 L1692.2 814.55 L1693.2 814.55 L1694.2 814.55 L1695.2 814.55 L1696.2 814.55 L1697.2 814.55 L1698.2 814.54 L1699.2 814.54 L1700.2 814.54 L1701.2 814.54 L1702.2 814.54 L1703.2 814.54 L1704.2 814.53 L1705.2 814.53 L1706.2 814.53 L1707.2 814.53 L1708.2 814.53 L1709.2 814.53 L1710.2 814.53 L1711.2 814.52 L1712.2 814.52 L1713.2 814.52 L1714.2 814.52 L1715.2 814.52 L1716.2 814.52 L1717.2 814.51 L1718.2 814.52 L1719.2 814.53 L1720.2 814.55 L1721.2 814.57 L1722.2 814.59 L1723.2 814.60 L1724.2 814.59 L1725.2 814.54 L1726.2 814.47 L1727.2 814.36 L1728.2 814.23 L1729.2 814.07 L1730.2 813.89 L1731.2 813.71 L1732.2 813.52 L1733.2 813.32 L1734.2 813.14 L1735.2 812.98 L1736.2 812.86 L1737.2 812.80 L1738.2 812.78 L1739.2 812.78 L1740.2 812.75 L1741.2 812.67 L1742.2 812.50 L1743.2 812.15 L1744.2 811.48 L1745.2 810.02 L1746.2 806.28 L1747.2 797.93 L1748.2 784.56 L1749.2 767.14 L1750.2 751.52 L1751.2 741.88 L1752.2 736.24 L1753.2 732.76 L1754.2 730.40 L1755.2 728.52 L1756.2 726.89 L1757.2 725.45 L1758.2 724.18 L1759.2 723.09 L1760.2 722.15 L1761.2 721.37 L1762.2 720.72 L1763.2 720.19 L1764.2 719.74 L1765.2 719.36 L1766.2 719.02 L1767.2 718.74 L1768.2 718.50 L1769.2 718.31 L1770.2 718.18 L1771.2 718.12 L1772.2 718.15 L1773.2 718.32 L1774.2 718.76 L1775.2 719.88 L1776.2 722.49 L1777.2 726.62 L1778.2 731.39 L1779.2 736.39 L1780.2 740.45 L1781.2 742.60 L1782.2 743.08 L1783.2 742.55 L1784.2 741.55 L1785.2 740.33 L1786.2 739.05 L1787.2 737.67 L1788.2 736.08 L1789.2 734.33 L1790.2 732.72 L1791.2 731.68 L1792.2 731.66 L1793.2 732.97 L1794.2 735.53 L1795.2 739.02 L1796.2 742.95 L1797.2 746.89 L1798.2 750.91 L1799.2 754.93 L1800.2 758.45 L1801.2 761.09 L1802.2 762.00 L1803.2 760.26 L1804.2 756.22 L1805.2 751.11 L1806.2 746.02 L1807.2 741.13 L1808.2 736.80 L1809.2 733.94 L1810.2 732.61 L1811.2 732.36 L1812.2 733.76 L1813.2 738.71 L1814.2 749.14 L1815.2 765.74 L1816.2 783.67 L1817.2 795.42 L1818.2 802.68 L1819.2 807.90 L1820.2 810.89 L1821.2 810.97 L1822.2 808.17 L1823.2 802.97 L1824.2 792.48 L1825.2 769.38 L1826.2 745.63 L1827.2 736.34 L1828.2 734.08 L1829.2 733.35 L1830.2 733.44 L1831.2 734.55 L1832.2 736.81 L1833.2 739.96 L1834.2 743.52 L1835.2 747.14 L1836.2 751.04 L1837.2 755.32 L1838.2 759.44 L1839.2 762.42 L1840.2 762.81 L1841.2 759.07 L1842.2 750.91 L1843.2 740.31 L1844.2 728.83 L1845.2 716.65 L1846.2 707.52 L1847.2 703.33 L1848.2 702.06 L1849.2 702.00 L1850.2 702.48 L1851.2 703.46 L1852.2 705.71 L1853.2 710.86 L1854.2 717.83 L1855.2 722.96 L1856.2 726.19 L1857.2 728.68 L1858.1 731.10" fill="none" stroke="#9fcde9" stroke-width="2" stroke-dasharray="0.1 4" stroke-linecap="round"/>
<path d="M1412.5 814.04 L1413.5 811.30 L1414.5 805.26 L1415.5 793.50 L1416.5 775.03 L1417.5 752.53 L1418.5 734.17 L1419.5 724.42 L1420.5 719.79 L1421.5 718.10 L1422.5 718.37 L1423.5 719.79 L1424.5 722.60 L1425.5 727.36 L1426.5 732.50 L1427.5 736.62 L1428.5 739.97 L1429.5 742.48 L1430.5 743.77 L1431.5 743.80 L1432.5 742.89 L1433.5 741.26 L1434.5 738.58 L1435.5 734.67 L1436.5 730.65 L1437.5 727.86 L1438.5 726.38 L1439.5 725.64 L1440.5 725.32 L1441.5 725.40 L1442.5 725.98 L1443.5 726.98 L1444.5 728.17 L1445.5 729.36 L1446.5 730.56 L1447.5 731.73 L1448.5 732.74 L1449.5 733.49 L1450.5 733.96 L1451.5 734.29 L1452.5 734.66 L1453.5 735.26 L1454.5 736.16 L1455.5 737.26 L1456.5 738.33 L1457.5 739.17 L1458.5 739.73 L1459.5 740.13 L1460.5 740.51 L1461.5 740.98 L1462.5 741.70 L1463.5 742.68 L1464.5 743.76 L1465.5 744.67 L1466.5 745.37 L1467.5 745.91 L1468.5 746.26 L1469.5 746.29 L1470.5 745.80 L1471.5 744.73 L1472.5 743.28 L1473.5 741.80 L1474.5 740.42 L1475.5 739.10 L1476.5 737.94 L1477.5 737.10 L1478.5 736.62 L1479.5 736.44 L1480.5 736.44 L1481.5 736.52 L1482.5 736.61 L1483.5 736.68 L1484.5 736.70 L1485.5 736.73 L1486.5 736.77 L1487.5 736.79 L1488.5 736.72 L1489.5 736.45 L1490.5 735.72 L1491.5 734.03 L1492.5 731.16 L1493.5 728.13 L1494.5 726.11 L1495.5 725.07 L1496.5 724.49 L1497.5 724.06 L1498.5 723.65 L1499.5 723.15 L1500.5 722.50 L1501.5 721.71 L1502.5 720.90 L1503.5 720.21 L1504.5 719.77 L1505.5 719.62 L1506.5 719.72 L1507.5 720.07 L1508.5 720.86 L1509.5 722.82 L1510.5 727.22 L1511.5 733.47 L1512.5 738.83 L1513.5 742.65 L1514.5 745.18 L1515.5 746.48 L1516.5 746.95 L1517.5 746.79 L1518.5 745.90 L1519.5 744.31 L1520.5 742.47 L1521.5 740.76 L1522.5 739.17 L1523.5 737.73 L1524.5 736.70 L1525.5 736.33 L1526.5 736.66 L1527.5 737.54 L1528.5 738.97 L1529.5 741.35 L1530.5 745.14 L1531.5 749.59 L1532.5 753.23 L1533.5 755.77 L1534.5 757.51 L1535.5 758.24 L1536.5 757.72 L1537.5 756.15 L1538.5 753.92 L1539.5 751.04 L1540.5 747.28 L1541.5 743.55 L1542.5 741.04 L1543.5 739.78 L1544.5 739.21 L1545.5 738.83 L1546.5 738.32 L1547.5 737.44 L1548.5 736.13 L1549.5 734.53 L1550.5 732.95 L1551.5 731.63 L1552.5 730.73 L1553.5 730.18 L1554.5 729.81 L1555.5 729.47 L1556.5 728.97 L1557.5 728.09 L1558.5 726.64 L1559.5 724.63 L1560.5 722.40 L1561.5 720.45 L1562.5 719.11 L1563.5 718.35 L1564.5 717.90 L1565.5 717.45 L1566.5 716.67 L1567.5 715.26 L1568.5 713.40 L1569.5 711.68 L1570.5 710.34 L1571.5 709.23 L1572.5 708.43 L1573.5 708.19 L1574.5 708.86 L1575.5 710.60 L1576.5 713.02 L1577.5 715.51 L1578.5 717.83 L1579.5 720.13 L1580.5 722.35 L1581.5 724.17 L1582.5 725.27 L1583.5 725.47 L1584.5 724.86 L1585.5 723.75 L1586.5 722.47 L1587.5 721.19 L1588.5 719.86 L1589.5 718.51 L1590.5 717.30 L1591.5 716.37 L1592.5 715.74 L1593.5 715.24 L1594.5 714.64 L1595.5 713.60 L1596.5 711.78 L1597.5 709.24 L1598.5 706.70 L1599.5 704.88 L1600.5 703.85 L1601.5 703.22 L1602.5 702.58 L1603.5 701.49 L1604.5 699.29 L1605.5 695.47 L1606.5 690.06 L1607.5 683.57 L1608.5 678.15 L1609.5 675.24 L1610.5 673.96 L1611.5 673.65 L1612.5 674.62 L1613.5 677.37 L1614.5 682.28 L1615.5 690.67 L1616.5 701.86 L1617.5 710.80 L1618.5 716.35 L1619.5 719.35 L1620.5 720.45 L1621.5 720.48 L1622.5 719.93 L1623.5 718.70 L1624.5 716.45 L1625.5 713.49 L1626.5 710.86 L1627.5 709.13 L1628.5 708.08 L1629.5 707.38 L1630.5 706.90 L1631.5 706.63 L1632.5 706.55 L1633.5 706.62 L1634.5 706.79 L1635.5 707.00 L1636.5 707.17 L1637.5 707.30 L1638.5 707.38 L1639.5 707.51 L1640.5 707.80 L1641.5 708.44 L1642.5 709.77 L1643.5 711.99 L1644.5 714.66 L1645.5 716.93 L1646.5 718.60 L1647.5 719.92 L1648.5 720.93 L1649.5 721.40 L1650.5 721.00 L1651.5 719.58 L1652.5 717.50 L1653.5 715.42 L1654.5 713.64 L1655.5 712.04 L1656.5 710.60 L1657.5 709.50 L1658.5 708.97 L1659.5 709.15 L1660.5 709.94 L1661.5 711.12 L1662.5 712.40 L1663.5 713.65 L1664.5 714.95 L1665.5 716.30 L1666.5 717.54 L1667.5 718.44 L1668.5 718.79 L1669.5 718.51 L1670.5 717.73 L1671.5 716.66 L1672.5 715.41 L1673.5 713.89 L1674.5 712.15 L1675.5 710.59 L1676.5 709.54 L1677.5 708.99 L1678.5 708.75 L1679.5 708.68 L1680.5 708.68 L1681.5 708.71 L1682.5 708.79 L1683.5 708.96 L1684.5 709.19 L1685.5 709.40 L1686.5 709.50 L1687.5 709.34 L1688.5 708.58 L1689.5 706.82 L1690.5 703.99 L1691.5 700.48 L1692.5 696.53 L1693.5 692.95 L1694.5 690.52 L1695.5 689.01 L1696.5 688.15 L1697.5 688.01 L1698.5 688.63 L1699.5 689.86 L1700.5 691.81 L1701.5 695.22 L1702.5 699.96 L1703.5 703.82 L1704.5 706.00 L1705.5 707.43 L1706.5 708.65 L1707.5 709.76 L1708.5 710.92 L1709.5 712.74 L1710.5 716.30 L1711.5 721.83 L1712.5 727.42 L1713.5 731.64 L1714.5 734.69 L1715.5 736.31 L1716.5 736.13 L1717.5 734.45 L1718.5 731.79 L1719.5 728.00 L1720.5 723.06 L1721.5 718.57 L1722.5 715.54 L1723.5 713.42 L1724.5 711.83 L1725.5 710.89 L1726.5 710.84 L1727.5 711.73 L1728.5 713.20 L1729.5 714.72 L1730.5 716.03 L1731.5 717.20 L1732.5 718.29 L1733.5 719.20 L1734.5 719.83 L1735.5 720.06 L1736.5 719.84 L1737.5 719.28 L1738.5 718.57 L1739.5 717.87 L1740.5 717.31 L1741.5 716.91 L1742.5 716.59 L1743.5 716.31 L1744.5 716.02 L1745.5 715.67 L1746.5 715.20 L1747.5 714.57 L1748.5 713.79 L1749.5 712.92 L1750.5 712.05 L1751.5 711.30 L1752.5 710.71 L1753.5 710.27 L1754.5 709.87 L1755.5 709.39 L1756.5 708.58 L1757.5 706.95 L1758.5 704.10 L1759.5 700.86 L1760.5 698.41 L1761.5 696.64 L1762.5 695.28 L1763.5 694.44 L1764.5 694.25 L1765.5 694.70 L1766.5 695.54 L1767.5 696.46 L1768.5 697.24 L1769.5 697.86 L1770.5 698.43 L1771.5 699.06 L1772.5 699.83 L1773.5 700.79 L1774.5 702.03 L1775.5 703.88 L1776.5 706.73 L1777.5 710.24 L1778.5 713.35 L1779.5 715.75 L1780.5 717.62 L1781.5 718.72 L1782.5 718.62 L1783.5 717.25 L1784.5 714.90 L1785.5 711.71 L1786.5 707.08 L1787.5 701.53 L1788.5 697.42 L1789.5 695.27 L1790.5 694.08 L1791.5 693.20 L1792.5 692.29 L1793.5 691.01 L1794.5 688.69 L1795.5 684.60 L1796.5 679.57 L1797.5 675.35 L1798.5 671.96 L1799.5 669.06 L1800.5 666.87 L1801.5 665.74 L1802.5 665.88 L1803.5 667.13 L1804.5 669.08 L1805.5 671.45 L1806.5 674.20 L1807.5 677.56 L1808.5 681.14 L1809.5 684.10 L1810.5 686.08 L1811.5 686.58 L1812.5 685.26 L1813.5 682.44 L1814.5 678.03 L1815.5 670.43 L1816.5 659.68 L1817.5 650.40 L1818.5 644.48 L1819.5 640.79 L1820.5 639.31 L1821.5 640.08 L1822.5 642.55 L1823.5 646.93 L1824.5 654.78 L1825.5 664.92 L1826.5 672.88 L1827.5 678.01 L1828.5 681.32 L1829.5 682.81 L1830.5 682.67 L1831.5 681.48 L1832.5 679.56 L1833.5 676.43 L1834.5 671.34 L1835.5 665.94 L1836.5 662.56 L1837.5 660.83 L1838.5 659.59 L1839.5 658.41 L1840.5 657.17 L1841.5 655.48 L1842.5 652.42 L1843.5 647.55 L1844.5 642.57 L1845.5 639.23 L1846.5 637.22 L1847.5 635.71 L1848.5 634.52 L1849.1 633.60" fill="none" stroke="#419bd2" stroke-width="2.05" stroke-linecap="round" stroke-linejoin="round"/>
</svg>
<div class="r" style="left:1485.3px;top:860.9px;width:179.5px;height:24px;background:#f3f4f6;border-radius:2px"></div>
<div class="r" style="left:1675.3px;top:860.9px;width:183.5px;height:24px;background:#f3f4f6;border-radius:2px"></div>
<div class="r" style="left:1493.3px;top:871.9px;width:13px;height:2px;background:#419bd2;border-radius:1px"></div>
<svg style="left:1683.3px;top:870.9px" width="16" height="4"><path d="M1 2 L14 2" stroke="#9fcde9" stroke-width="2" stroke-dasharray="0.1 4" stroke-linecap="round"/></svg>
<div class="t" style="left:1513.30px;top:868.17px;font-size:11.5px;line-height:11.5px;color:#6b6b6b;font-weight:400;letter-spacing:-0.06px;">Dec 31, 2019–Dec 1, 2023</div>
<div class="t" style="left:1703.30px;top:868.17px;font-size:11.5px;line-height:11.5px;color:#6b6b6b;font-weight:400;letter-spacing:-0.06px;">Jan 29, 2016–Dec 30, 2019</div>
<div class="card" style="left:264px;top:917px;width:527.33px;height:354px"></div>
<div class="card" style="left:807.33px;top:917px;width:527.33px;height:354px"></div>
<div class="card" style="left:1350.67px;top:917px;width:527.33px;height:354px"></div>
<div class="r" style="left:0px;top:0px;width:1903px;height:56px;background:#1a1a1a"></div>
<svg style="left:0;top:0" width="160" height="56" viewBox="0 0 160 56">
<path d="M17.9 22.4 L30.3 19.3 L30.6 39.5 L16 37.8 Z" fill="#fff"/>
<path d="M31.1 19.4 L34.5 20 L37.2 39.4 L31.3 39.6 Z" fill="#fff"/>
<path d="M21.6 21.8 C21.8 17.8 23.6 16.1 25.3 16.1 C27 16.1 28.3 17.4 28.6 20" fill="none" stroke="#fff" stroke-width="1.3"/>
<text x="19.6" y="35.8" font-family="Liberation Sans" font-weight="700" font-style="italic" font-size="16.5" fill="#1a1a1a" stroke="#1a1a1a" stroke-width="0.5" textLength="7.6" lengthAdjust="spacingAndGlyphs">S</text>
<path d="M124.2 23.2 L127.4 23.2 M125.8 21.6 L125.8 24.8" stroke="#fff" stroke-width="0.9"/>
<text x="41" y="36" font-family="Liberation Sans" font-weight="700" font-style="italic" font-size="20" fill="#fff" textLength="60" lengthAdjust="spacingAndGlyphs">shopify</text>
<text x="101.5" y="36" font-family="Liberation Sans" font-weight="400" font-style="italic" font-size="20" fill="#fff" stroke="#1a1a1a" stroke-width="0.7" textLength="33" lengthAdjust="spacingAndGlyphs">plus</text>
</svg>
<div class="r" style="left:662px;top:12px;width:580px;height:32px;background:#303030;border:1px solid #616161;border-radius:8px"></div>
<svg style="left:674px;top:20px" width="16" height="16" viewBox="0 0 16 16">
<circle cx="6.6" cy="6.8" r="4.6" fill="none" stroke="#b5b5b5" stroke-width="1.5"/>
<path d="M10 10.3 L13 13.6" stroke="#b5b5b5" stroke-width="1.5" stroke-linecap="round"/></svg>
<div class="t" style="left:695.00px;top:21.80px;font-size:13px;line-height:13px;color:#e3e3e3;font-weight:400;letter-spacing:0.05px;">Search</div>
<div class="t" style="left:1232.00px;top:21.80px;font-size:13px;line-height:13px;color:#d6d6d6;font-weight:400;transform:translateX(-100%);letter-spacing:0.2px;">Ctrl K</div>
<div class="r" style="left:1747px;top:12px;width:32px;height:32px;background:#303030;border-radius:8px"></div>
<svg style="left:1747px;top:12px" width="32" height="32" viewBox="0 0 32 32">
<path d="M10.3 20.6 C11.6 19.2 11.6 17.8 11.6 15.2 C11.6 12 13.5 9.6 16 9.6 C18.5 9.6 20.4 12 20.4 15.2 C20.4 17.8 20.4 19.2 21.7 20.6 Z" fill="none" stroke="#e3e3e3" stroke-width="1.4" stroke-linejoin="round"/>
<path d="M14.6 21.2 C14.6 22.8 17.4 22.8 17.4 21.2" fill="none" stroke="#e3e3e3" stroke-width="1.4"/></svg>
<div class="r" style="left:1787px;top:12px;width:107px;height:32px;background:#303030;border-radius:8px"></div>
<div class="t" style="left:1800.00px;top:21.62px;font-size:12.5px;line-height:12.5px;color:#e3e3e3;font-weight:400;letter-spacing:0.0px;-webkit-text-stroke:0.45px #e3e3e3;">CalmSpas</div>
<div class="r" style="left:1865px;top:14px;width:28px;height:28px;background:#c6e0ff;border-radius:8px"></div>
<div class="t" style="left:1879.00px;top:22.34px;font-size:12px;line-height:12px;color:#4d6384;font-weight:400;transform:translateX(-50%);letter-spacing:0.3px;">CS</div>
<div class="r" style="left:1903px;top:0px;width:16px;height:923px;background:#f1f1f1"></div>
<div class="r" style="left:1905px;top:17px;width:13px;height:289px;background:#c1c1c1"></div>
<svg style="left:1903px;top:0" width="16" height="923" viewBox="0 0 16 923"><path d="M4.5 11 L8.5 7 L12.5 11 Z" fill="#a3a3a3"/><path d="M4.5 911.5 L8.5 915.5 L12.5 911.5 Z" fill="#505050"/></svg>
</body></html>
